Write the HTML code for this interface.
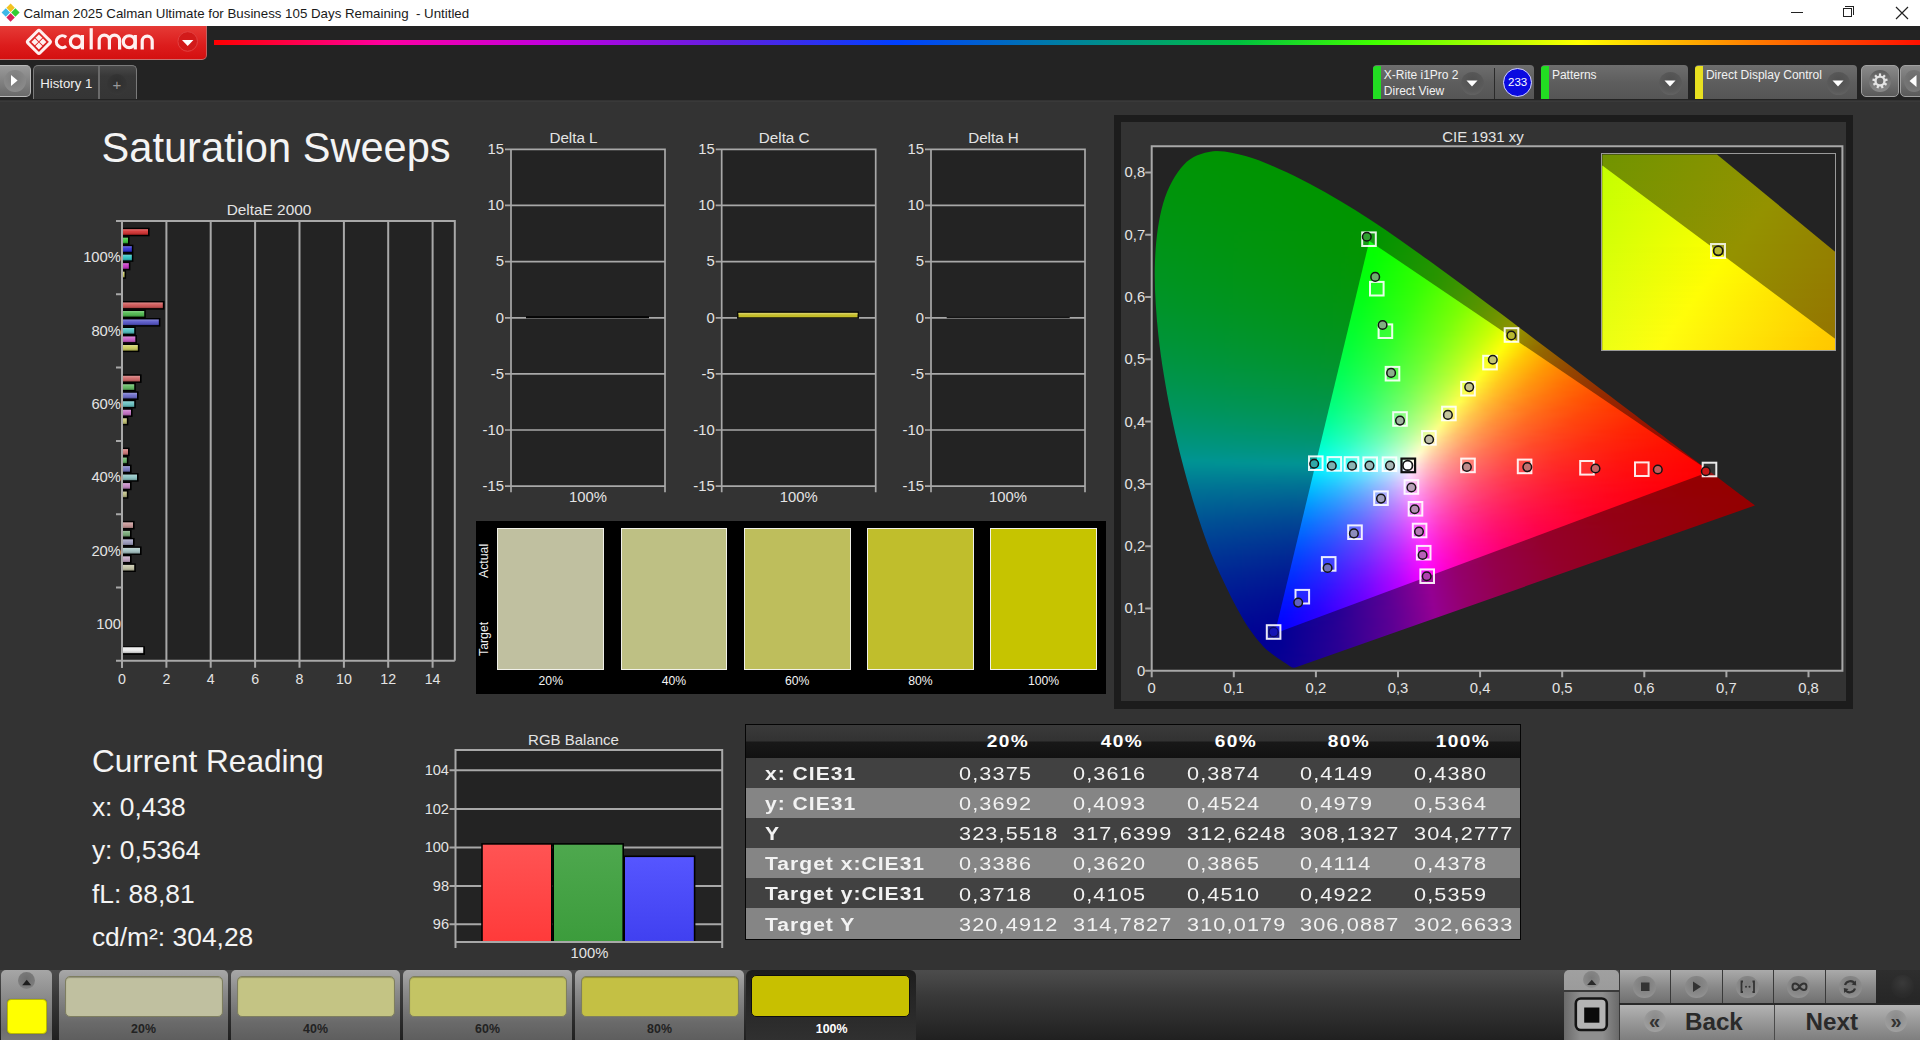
<!DOCTYPE html>
<html><head><meta charset="utf-8"><title>Calman</title>
<style>
*{margin:0;padding:0;box-sizing:border-box}
html,body{width:1920px;height:1040px;overflow:hidden;background:#333333;font-family:"Liberation Sans",sans-serif}
.a{position:absolute}
.t{position:absolute;white-space:nowrap;line-height:1}
</style></head><body>
<div class="a" style="left:0.0px;top:0.0px;width:1920.0px;height:26.0px;background:#ffffff"></div>
<svg class="a" style="left:0;top:0" width="24" height="26" viewBox="0 0 24 26">
<g transform="translate(10.6,12.6) rotate(45)">
<rect x="-6.4" y="-6.4" width="6" height="6" fill="#f2c322"/>
<rect x="0.4" y="-6.4" width="6" height="6" fill="#33cc33"/>
<rect x="-6.4" y="0.4" width="6" height="6" fill="#3fb8e8"/>
<rect x="0.4" y="0.4" width="6" height="6" fill="#d8245a"/>
</g></svg>
<div class="t" style="left:23.5px;top:6.8px;font-size:13.30px;color:#1a1a1a;font-weight:normal;letter-spacing:0.00px;">Calman 2025 Calman Ultimate for Business 105 Days Remaining &nbsp;- Untitled</div>
<div class="a" style="left:1791.0px;top:12.0px;width:12.0px;height:1.0px;background:#222"></div>
<div class="a" style="left:1843.0px;top:8.0px;width:9.0px;height:9.0px;border:1px solid #222;background:#fff"></div>
<div class="a" style="left:1845.0px;top:6.0px;width:9.0px;height:9.0px;border-top:1px solid #222;border-right:1px solid #222"></div>
<svg class="a" style="left:1895px;top:6px" width="14" height="14"><path d="M1,1 L13,13 M13,1 L1,13" stroke="#222" stroke-width="1.2"/></svg>
<div class="a" style="left:0.0px;top:26.0px;width:1920.0px;height:74.0px;background:#232323"></div>
<div class="a" style="left:0.0px;top:26.0px;width:207.0px;height:33.5px;background:linear-gradient(#e63a36,#dc1c1c 60%,#d41010);border-radius:0 0 5px 0;border-bottom:1px solid #c87070;border-right:1px solid #c06060"></div>
<svg class="a" style="left:0;top:26px" width="207" height="34" viewBox="0 26 207 34">
<g transform="translate(38.9,41.9) rotate(45)">
<rect x="-8.6" y="-8.6" width="17.2" height="17.2" rx="1.8" fill="none" stroke="#fff0f0" stroke-width="3.0"/>
<rect x="-5.3" y="-5.3" width="4.9" height="4.9" fill="#fff0f0"/><rect x="0.4" y="-5.3" width="4.9" height="4.9" fill="#fff0f0"/>
<rect x="-5.3" y="0.4" width="4.9" height="4.9" fill="#fff0f0"/><rect x="0.4" y="0.4" width="4.9" height="4.9" fill="#fff0f0"/>
</g>
<g fill="none" stroke="#fff0f0" stroke-width="3.2">
<path d="M66.2,37.2 A5.9,5.9 0 1 0 66.2,46.1"/>
<circle cx="76.3" cy="41.65" r="5.9"/>
<path d="M82.4,35 L82.4,49.4"/>
<path d="M91.2,28.2 L91.2,49.4"/>
<path d="M99.2,49.4 L99.2,40.3 A5.0,5.0 0 0 1 109.4,40.3 L109.4,49.4 M109.4,40.3 A5.0,5.0 0 0 1 119.6,40.3 L119.6,49.4"/>
<circle cx="129.2" cy="41.65" r="5.9"/>
<path d="M135.3,35 L135.3,49.4"/>
<path d="M142.2,49.4 L142.2,41.2 A5.0,5.0 0 0 1 152.2,41.2 L152.2,49.4"/>
</g>
<circle cx="187.7" cy="41.5" r="9.8" fill="#d21a1a" stroke="#e24040" stroke-width="1"/>
<path d="M182,40 L193.4,40 L187.7,46Z" fill="#ffffff"/>
</svg>
<div class="a" style="left:214.0px;top:40.0px;width:1706.0px;height:5.0px;background:linear-gradient(90deg,#ff0000 0%,#ff00a0 10%,#c000e0 20%,#6020e0 30%,#0040ff 40%,#0080a0 50%,#00c040 60%,#40ff00 68%,#ffff00 80%,#ff8000 90%,#ff1000 100%)"></div>
<div class="a" style="left:0.0px;top:65.0px;width:30.5px;height:31.5px;background:linear-gradient(#9a9a9a,#6a6a6a);border:1px solid #b8b8b8;border-left:none;border-radius:0 5px 5px 0"></div>
<div class="a" style="left:3.5px;top:70.0px;width:22.0px;height:22.0px;border-radius:50%;background:radial-gradient(circle at 50% 40%,#7a7a7a,#8a8a8a 70%,#959595)"></div>
<svg class="a" style="left:0;top:60px" width="30" height="40"><path d="M11,15 L17.6,20.5 L11,26Z" fill="#fff"/></svg>
<div class="a" style="left:32.8px;top:65.0px;width:104.0px;height:34.0px;background:linear-gradient(#4a4a4a,#383838 30%,#353535);border:1.5px solid #7a7a7a;border-bottom:none;border-radius:5px 5px 0 0"></div>
<div class="a" style="left:98.0px;top:66.0px;width:1.5px;height:33.0px;background:#6a6a6a"></div>
<div class="t" style="left:40.3px;top:76.5px;font-size:13.20px;color:#f0f0f0;font-weight:normal;letter-spacing:0.00px;">History 1</div>
<div class="a" style="left:106.5px;top:74.4px;width:20.5px;height:20.5px;border-radius:50%;background:radial-gradient(circle at 50% 40%,#2e2e2e,#363636 70%,#404040)"></div>
<div class="t" style="left:116.8px;top:77.2px;font-size:15.00px;color:#9a9a9a;font-weight:normal;letter-spacing:0.00px;transform:translateX(-50%) scaleX(1.000);transform-origin:50% 50%;">+</div>
<div class="a" style="left:1373.3px;top:65.0px;width:161.2px;height:34.0px;background:linear-gradient(#6e6e6e,#5e5e5e 50%,#555);border-radius:4px 4px 0 0"></div>
<div class="a" style="left:1373.3px;top:66.0px;width:7.5px;height:33.0px;background:linear-gradient(90deg,#22dd22,#22dd22);border-radius:3px 0 0 0"></div>
<div class="t" style="left:1383.8px;top:68.6px;font-size:12.00px;color:#f2f2f2;font-weight:normal;letter-spacing:0.00px;">X-Rite i1Pro 2</div>
<div class="t" style="left:1383.8px;top:84.5px;font-size:12.00px;color:#f2f2f2;font-weight:normal;letter-spacing:0.00px;">Direct View</div>
<div class="a" style="left:1460.8px;top:71.5px;width:23.0px;height:23.0px;border-radius:50%;background:radial-gradient(circle at 50% 35%,#505050,#5a5a5a 60%,#6a6a6a)"></div>
<svg class="a" style="left:1465.3px;top:78px" width="14" height="10"><path d="M1.5,2.5 L12.5,2.5 L7,8.5Z" fill="#fff"/></svg>
<div class="a" style="left:1494.2px;top:68.0px;width:1.2px;height:31.0px;background:#2a2a2a"></div>
<div class="a" style="left:1503.0px;top:67.5px;width:29.0px;height:29.0px;border-radius:50%;background:#0a0ae0;border:1.5px solid #d8d8ff"></div>
<div class="t" style="left:1517.6px;top:76.7px;font-size:11.50px;color:#ffffff;font-weight:normal;letter-spacing:0.00px;transform:translateX(-50%) scaleX(1.000);transform-origin:50% 50%;">233</div>
<div class="a" style="left:1541.4px;top:65.0px;width:146.6px;height:34.0px;background:linear-gradient(#6e6e6e,#5e5e5e 50%,#555);border-radius:4px 4px 0 0"></div>
<div class="a" style="left:1541.4px;top:66.0px;width:7.5px;height:33.0px;background:linear-gradient(90deg,#22dd22,#22dd22);border-radius:3px 0 0 0"></div>
<div class="t" style="left:1551.9px;top:68.6px;font-size:12.00px;color:#f2f2f2;font-weight:normal;letter-spacing:0.00px;">Patterns</div>
<div class="a" style="left:1658.5px;top:71.5px;width:23.0px;height:23.0px;border-radius:50%;background:radial-gradient(circle at 50% 35%,#505050,#5a5a5a 60%,#6a6a6a)"></div>
<svg class="a" style="left:1663.0px;top:78px" width="14" height="10"><path d="M1.5,2.5 L12.5,2.5 L7,8.5Z" fill="#fff"/></svg>
<div class="a" style="left:1695.4px;top:65.0px;width:161.9px;height:34.0px;background:linear-gradient(#6e6e6e,#5e5e5e 50%,#555);border-radius:4px 4px 0 0"></div>
<div class="a" style="left:1695.4px;top:66.0px;width:7.5px;height:33.0px;background:linear-gradient(90deg,#e8e020,#e8e020);border-radius:3px 0 0 0"></div>
<div class="t" style="left:1705.9px;top:68.6px;font-size:12.00px;color:#f2f2f2;font-weight:normal;letter-spacing:0.00px;">Direct Display Control</div>
<div class="a" style="left:1826.8px;top:71.5px;width:23.0px;height:23.0px;border-radius:50%;background:radial-gradient(circle at 50% 35%,#505050,#5a5a5a 60%,#6a6a6a)"></div>
<svg class="a" style="left:1831.3px;top:78px" width="14" height="10"><path d="M1.5,2.5 L12.5,2.5 L7,8.5Z" fill="#fff"/></svg>
<div class="a" style="left:1861.0px;top:65.0px;width:38.0px;height:31.5px;background:linear-gradient(#8a8a8a,#5a5a5a);border:1px solid #a0a0a0;border-radius:5px"></div>
<div class="a" style="left:1869.0px;top:70.0px;width:22.0px;height:22.0px;border-radius:50%;background:linear-gradient(#5c5c5c,#7a7a7a 60%,#8a8a8a)"></div>
<svg class="a" style="left:1868px;top:69px" width="24" height="24" viewBox="-12 -12 24 24"><g fill="#e4e4e4"><circle r="5.6"/><rect x="-1.1" y="-7.6" width="2.2" height="3" transform="rotate(0)"/><rect x="-1.1" y="-7.6" width="2.2" height="3" transform="rotate(40)"/><rect x="-1.1" y="-7.6" width="2.2" height="3" transform="rotate(80)"/><rect x="-1.1" y="-7.6" width="2.2" height="3" transform="rotate(120)"/><rect x="-1.1" y="-7.6" width="2.2" height="3" transform="rotate(160)"/><rect x="-1.1" y="-7.6" width="2.2" height="3" transform="rotate(200)"/><rect x="-1.1" y="-7.6" width="2.2" height="3" transform="rotate(240)"/><rect x="-1.1" y="-7.6" width="2.2" height="3" transform="rotate(280)"/><rect x="-1.1" y="-7.6" width="2.2" height="3" transform="rotate(320)"/></g><circle r="3.3" fill="#6e6e6e"/></svg>
<div class="a" style="left:1900.0px;top:65.0px;width:22.0px;height:31.5px;background:linear-gradient(#8a8a8a,#5a5a5a);border:1px solid #a0a0a0;border-radius:5px 0 0 5px"></div>
<div class="a" style="left:1904.0px;top:70.0px;width:20.0px;height:22.0px;border-radius:50%;background:radial-gradient(circle at 50% 40%,#6a6a6a,#777 70%,#808080)"></div>
<svg class="a" style="left:1900px;top:65px" width="20" height="32"><path d="M16.5,10 L9.5,16 L16.5,22Z" fill="#fff"/></svg>
<div class="a" style="left:0.0px;top:100.5px;width:1920.0px;height:1.2px;background:#393939"></div>
<div class="t" style="left:101.5px;top:127.1px;font-size:41.60px;color:#f4f4f4;font-weight:normal;letter-spacing:0.00px;">Saturation Sweeps</div>
<div class="a" style="left:122.0px;top:221.0px;width:332.8px;height:439.8px;background:#232323"></div>
<svg class="a" style="left:0;top:0" width="1920" height="1040"><path d="M166.4,221.0 L166.4,667.8 M210.7,221.0 L210.7,667.8 M255.1,221.0 L255.1,667.8 M299.5,221.0 L299.5,667.8 M343.9,221.0 L343.9,667.8 M388.2,221.0 L388.2,667.8 M432.6,221.0 L432.6,667.8 M122.0,667.8 L122.0,221.0 M122.0,221.0 L454.8,221.0 L454.8,660.8 M116,660.8 L454.8,660.8 M116,221.0 L122.0,221.0 M116,294.3 L122.0,294.3 M116,367.6 L122.0,367.6 M116,440.9 L122.0,440.9 M116,514.2 L122.0,514.2 M116,587.5 L122.0,587.5" stroke="#a8a8a8" stroke-width="2" fill="none"/><defs><linearGradient id="bsh" x1="0" y1="0" x2="0" y2="1"><stop offset="0" stop-color="#fff" stop-opacity="0.35"/><stop offset="0.45" stop-color="#fff" stop-opacity="0.1"/><stop offset="1" stop-color="#000" stop-opacity="0.25"/></linearGradient></defs><rect x="122.0" y="227.7" width="27.6" height="8.6" fill="#000"/><rect x="122.0" y="229.2" width="26.0" height="5.6" fill="#d02424"/><rect x="122.0" y="229.2" width="26.0" height="5.6" fill="url(#bsh)"/><rect x="122.0" y="236.2" width="7.6" height="8.6" fill="#000"/><rect x="122.0" y="237.7" width="6.0" height="5.6" fill="#30c030"/><rect x="122.0" y="237.7" width="6.0" height="5.6" fill="url(#bsh)"/><rect x="122.0" y="244.7" width="11.4" height="8.6" fill="#000"/><rect x="122.0" y="246.2" width="9.8" height="5.6" fill="#2424d0"/><rect x="122.0" y="246.2" width="9.8" height="5.6" fill="url(#bsh)"/><rect x="122.0" y="253.2" width="11.4" height="8.6" fill="#000"/><rect x="122.0" y="254.7" width="9.8" height="5.6" fill="#22c0c0"/><rect x="122.0" y="254.7" width="9.8" height="5.6" fill="url(#bsh)"/><rect x="122.0" y="261.7" width="8.4" height="8.6" fill="#000"/><rect x="122.0" y="263.2" width="6.8" height="5.6" fill="#c024c0"/><rect x="122.0" y="263.2" width="6.8" height="5.6" fill="url(#bsh)"/><rect x="122.0" y="270.2" width="4.1" height="8.6" fill="#000"/><rect x="122.0" y="271.7" width="2.5" height="5.6" fill="#c8c85a"/><rect x="122.0" y="271.7" width="2.5" height="5.6" fill="url(#bsh)"/><rect x="122.0" y="301.0" width="42.4" height="8.6" fill="#000"/><rect x="122.0" y="302.5" width="40.8" height="5.6" fill="#cc4a4a"/><rect x="122.0" y="302.5" width="40.8" height="5.6" fill="url(#bsh)"/><rect x="122.0" y="309.5" width="23.8" height="8.6" fill="#000"/><rect x="122.0" y="311.0" width="22.2" height="5.6" fill="#44b444"/><rect x="122.0" y="311.0" width="22.2" height="5.6" fill="url(#bsh)"/><rect x="122.0" y="318.0" width="38.4" height="8.6" fill="#000"/><rect x="122.0" y="319.5" width="36.8" height="5.6" fill="#4a4ac4"/><rect x="122.0" y="319.5" width="36.8" height="5.6" fill="url(#bsh)"/><rect x="122.0" y="326.5" width="13.8" height="8.6" fill="#000"/><rect x="122.0" y="328.0" width="12.2" height="5.6" fill="#44bcbc"/><rect x="122.0" y="328.0" width="12.2" height="5.6" fill="url(#bsh)"/><rect x="122.0" y="335.0" width="14.9" height="8.6" fill="#000"/><rect x="122.0" y="336.5" width="13.3" height="5.6" fill="#c252c2"/><rect x="122.0" y="336.5" width="13.3" height="5.6" fill="url(#bsh)"/><rect x="122.0" y="343.5" width="17.4" height="8.6" fill="#000"/><rect x="122.0" y="345.0" width="15.8" height="5.6" fill="#c8c852"/><rect x="122.0" y="345.0" width="15.8" height="5.6" fill="url(#bsh)"/><rect x="122.0" y="374.3" width="19.6" height="8.6" fill="#000"/><rect x="122.0" y="375.8" width="18.0" height="5.6" fill="#cc5e5e"/><rect x="122.0" y="375.8" width="18.0" height="5.6" fill="url(#bsh)"/><rect x="122.0" y="382.8" width="13.8" height="8.6" fill="#000"/><rect x="122.0" y="384.3" width="12.2" height="5.6" fill="#56b456"/><rect x="122.0" y="384.3" width="12.2" height="5.6" fill="url(#bsh)"/><rect x="122.0" y="391.3" width="16.6" height="8.6" fill="#000"/><rect x="122.0" y="392.8" width="15.0" height="5.6" fill="#6464c8"/><rect x="122.0" y="392.8" width="15.0" height="5.6" fill="url(#bsh)"/><rect x="122.0" y="399.8" width="13.8" height="8.6" fill="#000"/><rect x="122.0" y="401.3" width="12.2" height="5.6" fill="#5cbcbc"/><rect x="122.0" y="401.3" width="12.2" height="5.6" fill="url(#bsh)"/><rect x="122.0" y="408.3" width="10.6" height="8.6" fill="#000"/><rect x="122.0" y="409.8" width="9.0" height="5.6" fill="#c068c0"/><rect x="122.0" y="409.8" width="9.0" height="5.6" fill="url(#bsh)"/><rect x="122.0" y="416.8" width="6.4" height="8.6" fill="#000"/><rect x="122.0" y="418.3" width="4.8" height="5.6" fill="#bebe6a"/><rect x="122.0" y="418.3" width="4.8" height="5.6" fill="url(#bsh)"/><rect x="122.0" y="447.6" width="7.6" height="8.6" fill="#000"/><rect x="122.0" y="449.1" width="6.0" height="5.6" fill="#cc7070"/><rect x="122.0" y="449.1" width="6.0" height="5.6" fill="url(#bsh)"/><rect x="122.0" y="456.1" width="6.4" height="8.6" fill="#000"/><rect x="122.0" y="457.6" width="4.8" height="5.6" fill="#5cac5c"/><rect x="122.0" y="457.6" width="4.8" height="5.6" fill="url(#bsh)"/><rect x="122.0" y="464.6" width="9.6" height="8.6" fill="#000"/><rect x="122.0" y="466.1" width="8.0" height="5.6" fill="#7070bc"/><rect x="122.0" y="466.1" width="8.0" height="5.6" fill="url(#bsh)"/><rect x="122.0" y="473.1" width="16.6" height="8.6" fill="#000"/><rect x="122.0" y="474.6" width="15.0" height="5.6" fill="#84bebe"/><rect x="122.0" y="474.6" width="15.0" height="5.6" fill="url(#bsh)"/><rect x="122.0" y="481.6" width="9.6" height="8.6" fill="#000"/><rect x="122.0" y="483.1" width="8.0" height="5.6" fill="#c080c0"/><rect x="122.0" y="483.1" width="8.0" height="5.6" fill="url(#bsh)"/><rect x="122.0" y="490.1" width="6.4" height="8.6" fill="#000"/><rect x="122.0" y="491.6" width="4.8" height="5.6" fill="#b6b67a"/><rect x="122.0" y="491.6" width="4.8" height="5.6" fill="url(#bsh)"/><rect x="122.0" y="520.9" width="12.6" height="8.6" fill="#000"/><rect x="122.0" y="522.4" width="11.0" height="5.6" fill="#c08c8c"/><rect x="122.0" y="522.4" width="11.0" height="5.6" fill="url(#bsh)"/><rect x="122.0" y="529.4" width="9.6" height="8.6" fill="#000"/><rect x="122.0" y="530.9" width="8.0" height="5.6" fill="#6ea46e"/><rect x="122.0" y="530.9" width="8.0" height="5.6" fill="url(#bsh)"/><rect x="122.0" y="537.9" width="12.6" height="8.6" fill="#000"/><rect x="122.0" y="539.4" width="11.0" height="5.6" fill="#9494b8"/><rect x="122.0" y="539.4" width="11.0" height="5.6" fill="url(#bsh)"/><rect x="122.0" y="546.4" width="19.6" height="8.6" fill="#000"/><rect x="122.0" y="547.9" width="18.0" height="5.6" fill="#a0c0c0"/><rect x="122.0" y="547.9" width="18.0" height="5.6" fill="url(#bsh)"/><rect x="122.0" y="554.9" width="9.6" height="8.6" fill="#000"/><rect x="122.0" y="556.4" width="8.0" height="5.6" fill="#bc9ebc"/><rect x="122.0" y="556.4" width="8.0" height="5.6" fill="url(#bsh)"/><rect x="122.0" y="563.4" width="13.8" height="8.6" fill="#000"/><rect x="122.0" y="564.9" width="12.2" height="5.6" fill="#bebe9e"/><rect x="122.0" y="564.9" width="12.2" height="5.6" fill="url(#bsh)"/><rect x="122.0" y="646.3" width="23.0" height="8.6" fill="#000"/><rect x="122.0" y="647.3" width="21.2" height="5.8" fill="#ececec"/><rect x="122.0" y="647.3" width="21.2" height="5.8" fill="url(#bsh)"/><path d="M122.0,667.8 L122.0,221.0" stroke="#a8a8a8" stroke-width="2" fill="none"/></svg>
<div class="t" style="left:121.0px;top:250.3px;font-size:14.80px;color:#e4e4e4;font-weight:normal;letter-spacing:0.00px;transform:translateX(-100%) scaleX(1.000);transform-origin:100% 50%;">100%</div>
<div class="t" style="left:121.0px;top:323.6px;font-size:14.80px;color:#e4e4e4;font-weight:normal;letter-spacing:0.00px;transform:translateX(-100%) scaleX(1.000);transform-origin:100% 50%;">80%</div>
<div class="t" style="left:121.0px;top:396.9px;font-size:14.80px;color:#e4e4e4;font-weight:normal;letter-spacing:0.00px;transform:translateX(-100%) scaleX(1.000);transform-origin:100% 50%;">60%</div>
<div class="t" style="left:121.0px;top:470.2px;font-size:14.80px;color:#e4e4e4;font-weight:normal;letter-spacing:0.00px;transform:translateX(-100%) scaleX(1.000);transform-origin:100% 50%;">40%</div>
<div class="t" style="left:121.0px;top:543.5px;font-size:14.80px;color:#e4e4e4;font-weight:normal;letter-spacing:0.00px;transform:translateX(-100%) scaleX(1.000);transform-origin:100% 50%;">20%</div>
<div class="t" style="left:121.0px;top:616.8px;font-size:14.80px;color:#e4e4e4;font-weight:normal;letter-spacing:0.00px;transform:translateX(-100%) scaleX(1.000);transform-origin:100% 50%;">100</div>
<div class="t" style="left:122.0px;top:671.5px;font-size:14.20px;color:#e4e4e4;font-weight:normal;letter-spacing:0.00px;transform:translateX(-50%) scaleX(1.000);transform-origin:50% 50%;">0</div>
<div class="t" style="left:166.4px;top:671.5px;font-size:14.20px;color:#e4e4e4;font-weight:normal;letter-spacing:0.00px;transform:translateX(-50%) scaleX(1.000);transform-origin:50% 50%;">2</div>
<div class="t" style="left:210.7px;top:671.5px;font-size:14.20px;color:#e4e4e4;font-weight:normal;letter-spacing:0.00px;transform:translateX(-50%) scaleX(1.000);transform-origin:50% 50%;">4</div>
<div class="t" style="left:255.1px;top:671.5px;font-size:14.20px;color:#e4e4e4;font-weight:normal;letter-spacing:0.00px;transform:translateX(-50%) scaleX(1.000);transform-origin:50% 50%;">6</div>
<div class="t" style="left:299.5px;top:671.5px;font-size:14.20px;color:#e4e4e4;font-weight:normal;letter-spacing:0.00px;transform:translateX(-50%) scaleX(1.000);transform-origin:50% 50%;">8</div>
<div class="t" style="left:343.9px;top:671.5px;font-size:14.20px;color:#e4e4e4;font-weight:normal;letter-spacing:0.00px;transform:translateX(-50%) scaleX(1.000);transform-origin:50% 50%;">10</div>
<div class="t" style="left:388.2px;top:671.5px;font-size:14.20px;color:#e4e4e4;font-weight:normal;letter-spacing:0.00px;transform:translateX(-50%) scaleX(1.000);transform-origin:50% 50%;">12</div>
<div class="t" style="left:432.6px;top:671.5px;font-size:14.20px;color:#e4e4e4;font-weight:normal;letter-spacing:0.00px;transform:translateX(-50%) scaleX(1.000);transform-origin:50% 50%;">14</div>
<div class="t" style="left:269.0px;top:202.3px;font-size:15.40px;color:#e4e4e4;font-weight:normal;letter-spacing:0.00px;transform:translateX(-50%) scaleX(1.000);transform-origin:50% 50%;">DeltaE 2000</div>
<div class="a" style="left:511.0px;top:149.3px;width:154.0px;height:336.9px;background:#232323"></div>
<div class="a" style="left:721.7px;top:149.3px;width:154.0px;height:336.9px;background:#232323"></div>
<div class="a" style="left:931.0px;top:149.3px;width:154.0px;height:336.9px;background:#232323"></div>
<svg class="a" style="left:0;top:0" width="1920" height="1040"><path d="M505.0,205.4 L665.0,205.4 M505.0,261.6 L665.0,261.6 M505.0,317.8 L665.0,317.8 M505.0,373.9 L665.0,373.9 M505.0,430.0 L665.0,430.0 M505.0,149.3 L511.0,149.3 M505.0,486.2 L665.0,486.2 M511.0,492.2 L511.0,149.3 L665.0,149.3 L665.0,492.2" stroke="#a8a8a8" stroke-width="1.7" fill="none"/><rect x="526.0" y="316.1" width="123" height="2.2" fill="#050505"/><path d="M715.7,205.4 L875.7,205.4 M715.7,261.6 L875.7,261.6 M715.7,317.8 L875.7,317.8 M715.7,373.9 L875.7,373.9 M715.7,430.0 L875.7,430.0 M715.7,149.3 L721.7,149.3 M715.7,486.2 L875.7,486.2 M721.7,492.2 L721.7,149.3 L875.7,149.3 L875.7,492.2" stroke="#a8a8a8" stroke-width="1.7" fill="none"/><rect x="737.0" y="311.4" width="122" height="7.4" fill="#0a0a0a"/><rect x="738.5" y="312.9" width="119" height="4.4" fill="#c4bc28"/><rect x="738.5" y="312.9" width="119" height="1.5" fill="#d8d060"/><path d="M925.0,205.4 L1085.0,205.4 M925.0,261.6 L1085.0,261.6 M925.0,317.8 L1085.0,317.8 M925.0,373.9 L1085.0,373.9 M925.0,430.0 L1085.0,430.0 M925.0,149.3 L931.0,149.3 M925.0,486.2 L1085.0,486.2 M931.0,492.2 L931.0,149.3 L1085.0,149.3 L1085.0,492.2" stroke="#a8a8a8" stroke-width="1.7" fill="none"/><rect x="946.7" y="316.6" width="123" height="1.6" fill="#151515"/></svg>
<div class="t" style="left:504.0px;top:142.0px;font-size:14.80px;color:#e4e4e4;font-weight:normal;letter-spacing:0.00px;transform:translateX(-100%) scaleX(1.000);transform-origin:100% 50%;">15</div>
<div class="t" style="left:504.0px;top:198.2px;font-size:14.80px;color:#e4e4e4;font-weight:normal;letter-spacing:0.00px;transform:translateX(-100%) scaleX(1.000);transform-origin:100% 50%;">10</div>
<div class="t" style="left:504.0px;top:254.3px;font-size:14.80px;color:#e4e4e4;font-weight:normal;letter-spacing:0.00px;transform:translateX(-100%) scaleX(1.000);transform-origin:100% 50%;">5</div>
<div class="t" style="left:504.0px;top:310.5px;font-size:14.80px;color:#e4e4e4;font-weight:normal;letter-spacing:0.00px;transform:translateX(-100%) scaleX(1.000);transform-origin:100% 50%;">0</div>
<div class="t" style="left:504.0px;top:366.6px;font-size:14.80px;color:#e4e4e4;font-weight:normal;letter-spacing:0.00px;transform:translateX(-100%) scaleX(1.000);transform-origin:100% 50%;">-5</div>
<div class="t" style="left:504.0px;top:422.8px;font-size:14.80px;color:#e4e4e4;font-weight:normal;letter-spacing:0.00px;transform:translateX(-100%) scaleX(1.000);transform-origin:100% 50%;">-10</div>
<div class="t" style="left:504.0px;top:478.9px;font-size:14.80px;color:#e4e4e4;font-weight:normal;letter-spacing:0.00px;transform:translateX(-100%) scaleX(1.000);transform-origin:100% 50%;">-15</div>
<div class="t" style="left:573.5px;top:130.0px;font-size:15.20px;color:#e4e4e4;font-weight:normal;letter-spacing:0.00px;transform:translateX(-50%) scaleX(1.000);transform-origin:50% 50%;">Delta L</div>
<div class="t" style="left:588.0px;top:490.0px;font-size:14.80px;color:#e4e4e4;font-weight:normal;letter-spacing:0.00px;transform:translateX(-50%) scaleX(1.000);transform-origin:50% 50%;">100%</div>
<div class="t" style="left:714.7px;top:142.0px;font-size:14.80px;color:#e4e4e4;font-weight:normal;letter-spacing:0.00px;transform:translateX(-100%) scaleX(1.000);transform-origin:100% 50%;">15</div>
<div class="t" style="left:714.7px;top:198.2px;font-size:14.80px;color:#e4e4e4;font-weight:normal;letter-spacing:0.00px;transform:translateX(-100%) scaleX(1.000);transform-origin:100% 50%;">10</div>
<div class="t" style="left:714.7px;top:254.3px;font-size:14.80px;color:#e4e4e4;font-weight:normal;letter-spacing:0.00px;transform:translateX(-100%) scaleX(1.000);transform-origin:100% 50%;">5</div>
<div class="t" style="left:714.7px;top:310.5px;font-size:14.80px;color:#e4e4e4;font-weight:normal;letter-spacing:0.00px;transform:translateX(-100%) scaleX(1.000);transform-origin:100% 50%;">0</div>
<div class="t" style="left:714.7px;top:366.6px;font-size:14.80px;color:#e4e4e4;font-weight:normal;letter-spacing:0.00px;transform:translateX(-100%) scaleX(1.000);transform-origin:100% 50%;">-5</div>
<div class="t" style="left:714.7px;top:422.8px;font-size:14.80px;color:#e4e4e4;font-weight:normal;letter-spacing:0.00px;transform:translateX(-100%) scaleX(1.000);transform-origin:100% 50%;">-10</div>
<div class="t" style="left:714.7px;top:478.9px;font-size:14.80px;color:#e4e4e4;font-weight:normal;letter-spacing:0.00px;transform:translateX(-100%) scaleX(1.000);transform-origin:100% 50%;">-15</div>
<div class="t" style="left:784.2px;top:130.0px;font-size:15.20px;color:#e4e4e4;font-weight:normal;letter-spacing:0.00px;transform:translateX(-50%) scaleX(1.000);transform-origin:50% 50%;">Delta C</div>
<div class="t" style="left:798.7px;top:490.0px;font-size:14.80px;color:#e4e4e4;font-weight:normal;letter-spacing:0.00px;transform:translateX(-50%) scaleX(1.000);transform-origin:50% 50%;">100%</div>
<div class="t" style="left:924.0px;top:142.0px;font-size:14.80px;color:#e4e4e4;font-weight:normal;letter-spacing:0.00px;transform:translateX(-100%) scaleX(1.000);transform-origin:100% 50%;">15</div>
<div class="t" style="left:924.0px;top:198.2px;font-size:14.80px;color:#e4e4e4;font-weight:normal;letter-spacing:0.00px;transform:translateX(-100%) scaleX(1.000);transform-origin:100% 50%;">10</div>
<div class="t" style="left:924.0px;top:254.3px;font-size:14.80px;color:#e4e4e4;font-weight:normal;letter-spacing:0.00px;transform:translateX(-100%) scaleX(1.000);transform-origin:100% 50%;">5</div>
<div class="t" style="left:924.0px;top:310.5px;font-size:14.80px;color:#e4e4e4;font-weight:normal;letter-spacing:0.00px;transform:translateX(-100%) scaleX(1.000);transform-origin:100% 50%;">0</div>
<div class="t" style="left:924.0px;top:366.6px;font-size:14.80px;color:#e4e4e4;font-weight:normal;letter-spacing:0.00px;transform:translateX(-100%) scaleX(1.000);transform-origin:100% 50%;">-5</div>
<div class="t" style="left:924.0px;top:422.8px;font-size:14.80px;color:#e4e4e4;font-weight:normal;letter-spacing:0.00px;transform:translateX(-100%) scaleX(1.000);transform-origin:100% 50%;">-10</div>
<div class="t" style="left:924.0px;top:478.9px;font-size:14.80px;color:#e4e4e4;font-weight:normal;letter-spacing:0.00px;transform:translateX(-100%) scaleX(1.000);transform-origin:100% 50%;">-15</div>
<div class="t" style="left:993.5px;top:130.0px;font-size:15.20px;color:#e4e4e4;font-weight:normal;letter-spacing:0.00px;transform:translateX(-50%) scaleX(1.000);transform-origin:50% 50%;">Delta H</div>
<div class="t" style="left:1008.0px;top:490.0px;font-size:14.80px;color:#e4e4e4;font-weight:normal;letter-spacing:0.00px;transform:translateX(-50%) scaleX(1.000);transform-origin:50% 50%;">100%</div>
<div class="a" style="left:475.8px;top:521.0px;width:630.5px;height:172.5px;background:#000"></div>
<div class="a" style="left:497.4px;top:528.3px;width:106.8px;height:141.5px;background:#c0c0a0;border:1.5px solid #f0f0e8"></div>
<div class="t" style="left:550.8px;top:675.4px;font-size:12.20px;color:#f4f4f4;font-weight:normal;letter-spacing:0.00px;transform:translateX(-50%) scaleX(1.000);transform-origin:50% 50%;">20%</div>
<div class="a" style="left:620.6px;top:528.3px;width:106.8px;height:141.5px;background:#bec084;border:1.5px solid #f0f0e8"></div>
<div class="t" style="left:674.0px;top:675.4px;font-size:12.20px;color:#f4f4f4;font-weight:normal;letter-spacing:0.00px;transform:translateX(-50%) scaleX(1.000);transform-origin:50% 50%;">40%</div>
<div class="a" style="left:743.8px;top:528.3px;width:106.8px;height:141.5px;background:#bebe5c;border:1.5px solid #f0f0e8"></div>
<div class="t" style="left:797.2px;top:675.4px;font-size:12.20px;color:#f4f4f4;font-weight:normal;letter-spacing:0.00px;transform:translateX(-50%) scaleX(1.000);transform-origin:50% 50%;">60%</div>
<div class="a" style="left:867.0px;top:528.3px;width:106.8px;height:141.5px;background:#c0be2c;border:1.5px solid #f0f0e8"></div>
<div class="t" style="left:920.4px;top:675.4px;font-size:12.20px;color:#f4f4f4;font-weight:normal;letter-spacing:0.00px;transform:translateX(-50%) scaleX(1.000);transform-origin:50% 50%;">80%</div>
<div class="a" style="left:990.2px;top:528.3px;width:106.8px;height:141.5px;background:#c6c400;border:1.5px solid #f0f0e8"></div>
<div class="t" style="left:1043.6px;top:675.4px;font-size:12.20px;color:#f4f4f4;font-weight:normal;letter-spacing:0.00px;transform:translateX(-50%) scaleX(1.000);transform-origin:50% 50%;">100%</div>
<div class="t" style="left:478px;top:577.5px;font-size:12.3px;color:#f0f0f0;transform:rotate(-90deg);transform-origin:0 0">Actual</div>
<div class="t" style="left:478px;top:656px;font-size:12.3px;color:#f0f0f0;transform:rotate(-90deg);transform-origin:0 0">Target</div>
<div class="a" style="left:1113.7px;top:114.6px;width:739.0px;height:594.0px;background:#1c1c1c"></div>
<div class="a" style="left:1120.5px;top:121.9px;width:725.0px;height:579.6px;background:#333333"></div>
<div class="a" style="left:1151.7px;top:146.3px;width:690.7px;height:524.5px;background:#232323"></div>
<div class="a" style="left:0;top:0;width:1920px;height:1040px;clip-path:path('M1294.6,667.7 C1294.5,667.7 1294.3,667.8 1294.0,667.8 C1293.6,667.8 1293.0,667.8 1292.4,667.6 C1291.8,667.4 1291.3,667.1 1290.4,666.5 C1289.4,665.9 1288.4,665.1 1286.7,664.0 C1285.0,662.9 1283.1,661.7 1280.3,659.8 C1277.5,657.8 1272.8,654.6 1269.9,652.3 C1267.0,650.0 1265.7,648.9 1262.9,645.9 C1260.2,643.0 1257.1,639.7 1253.6,634.8 C1250.0,629.9 1246.2,624.5 1241.7,616.7 C1237.2,608.9 1232.3,600.0 1226.7,588.1 C1221.1,576.3 1214.4,562.6 1208.1,545.8 C1201.8,528.9 1195.2,509.0 1189.0,487.0 C1182.8,465.0 1176.1,439.0 1171.0,413.7 C1165.9,388.4 1161.1,360.5 1158.4,335.4 C1155.8,310.2 1154.1,284.9 1154.9,262.9 C1155.7,240.9 1158.3,219.7 1163.1,203.4 C1167.9,187.1 1175.4,173.6 1183.6,164.9 C1191.9,156.2 1202.4,152.8 1212.7,151.3 C1223.0,149.9 1234.5,153.2 1245.5,156.1 C1256.5,159.0 1267.9,164.1 1278.7,168.7 C1289.5,173.4 1299.8,178.5 1310.1,183.9 C1320.3,189.2 1330.2,194.9 1340.2,200.9 C1350.2,206.8 1360.1,213.1 1369.9,219.6 C1379.8,226.0 1389.5,232.7 1399.3,239.5 C1409.1,246.3 1418.8,253.3 1428.6,260.3 C1438.4,267.3 1448.2,274.5 1458.0,281.7 C1467.8,288.9 1477.5,296.2 1487.2,303.5 C1497.0,310.7 1506.7,318.0 1516.3,325.2 C1525.9,332.4 1535.4,339.6 1544.8,346.7 C1554.2,353.8 1563.4,360.8 1572.5,367.6 C1581.5,374.5 1590.4,381.2 1599.0,387.7 C1607.6,394.2 1616.0,400.5 1623.9,406.5 C1631.9,412.5 1639.6,418.4 1646.7,423.8 C1653.8,429.1 1657.9,432.2 1666.5,438.7 C1675.1,445.2 1689.5,456.1 1698.3,462.7 C1707.1,469.4 1713.7,474.4 1719.4,478.7 C1725.2,483.1 1729.1,486.0 1732.9,488.9 C1736.6,491.7 1739.5,493.9 1742.0,495.8 C1744.5,497.7 1746.2,499.0 1747.7,500.1 C1749.3,501.2 1749.8,501.7 1751.0,502.6 C1752.2,503.5 1754.2,505.0 1754.9,505.5 Z')"><div class="a" style="left:0;top:0;width:1920px;height:1040px;filter:blur(1.3px)"><div style="position:absolute;left:1198px;top:150px;width:42px;height:3px;background:linear-gradient(90deg,#009403 0px,#009400 42px)"></div><div style="position:absolute;left:1190px;top:153px;width:62px;height:3px;background:linear-gradient(90deg,#009404 0px,#009400 62px)"></div><div style="position:absolute;left:1184px;top:156px;width:77px;height:3px;background:linear-gradient(90deg,#009405 0px,#009400 77px)"></div><div style="position:absolute;left:1180px;top:159px;width:89px;height:3px;background:linear-gradient(90deg,#009405 0px,#009400 89px)"></div><div style="position:absolute;left:1177px;top:162px;width:100px;height:3px;background:linear-gradient(90deg,#009406 0px,#009400 100px)"></div><div style="position:absolute;left:1174px;top:165px;width:110px;height:3px;background:linear-gradient(90deg,#009407 0px,#009400 110px)"></div><div style="position:absolute;left:1172px;top:168px;width:118px;height:3px;background:linear-gradient(90deg,#009407 0px,#009400 118px)"></div><div style="position:absolute;left:1170px;top:171px;width:127px;height:3px;background:linear-gradient(90deg,#009408 0px,#009400 127px)"></div><div style="position:absolute;left:1168px;top:174px;width:135px;height:3px;background:linear-gradient(90deg,#009409 0px,#009400 133px,#009400 135px)"></div><div style="position:absolute;left:1166px;top:177px;width:143px;height:3px;background:linear-gradient(90deg,#009409 0px,#009400 143px)"></div><div style="position:absolute;left:1165px;top:180px;width:150px;height:3px;background:linear-gradient(90deg,#00940a 0px,#009400 146px,#009400 150px)"></div><div style="position:absolute;left:1163px;top:183px;width:158px;height:3px;background:linear-gradient(90deg,#00940b 0px,#009400 150px,#009400 158px)"></div><div style="position:absolute;left:1162px;top:186px;width:164px;height:3px;background:linear-gradient(90deg,#00940b 0px,#009400 156px,#009400 164px)"></div><div style="position:absolute;left:1161px;top:189px;width:170px;height:3px;background:linear-gradient(90deg,#00940c 0px,#009400 158px,#009400 170px)"></div><div style="position:absolute;left:1159px;top:192px;width:178px;height:3px;background:linear-gradient(90deg,#00940c 0px,#009400 168px,#009400 178px)"></div><div style="position:absolute;left:1158px;top:195px;width:184px;height:3px;background:linear-gradient(90deg,#00940d 0px,#009400 172px,#009400 184px)"></div><div style="position:absolute;left:1157px;top:198px;width:190px;height:3px;background:linear-gradient(90deg,#00940e 0px,#009400 174px,#009400 190px)"></div><div style="position:absolute;left:1156px;top:201px;width:196px;height:3px;background:linear-gradient(90deg,#00940e 0px,#009400 182px,#009400 196px)"></div><div style="position:absolute;left:1156px;top:204px;width:201px;height:3px;background:linear-gradient(90deg,#00940f 0px,#009400 185px,#009400 201px)"></div><div style="position:absolute;left:1155px;top:207px;width:207px;height:3px;background:linear-gradient(90deg,#009410 0px,#009400 187px,#009400 207px)"></div><div style="position:absolute;left:1154px;top:210px;width:212px;height:3px;background:linear-gradient(90deg,#009410 0px,#009400 196px,#009400 212px)"></div><div style="position:absolute;left:1154px;top:213px;width:217px;height:3px;background:linear-gradient(90deg,#009411 0px,#009400 197px,#009400 217px)"></div><div style="position:absolute;left:1153px;top:216px;width:223px;height:3px;background:linear-gradient(90deg,#009412 0px,#009400 201px,#009400 223px)"></div><div style="position:absolute;left:1152px;top:219px;width:228px;height:3px;background:linear-gradient(90deg,#009412 0px,#009400 210px,#029400 228px)"></div><div style="position:absolute;left:1152px;top:222px;width:233px;height:3px;background:linear-gradient(90deg,#009413 0px,#009400 213px,#049400 233px)"></div><div style="position:absolute;left:1151px;top:225px;width:238px;height:3px;background:linear-gradient(90deg,#009414 0px,#009400 218px,#059400 238px)"></div><div style="position:absolute;left:1151px;top:228px;width:242px;height:3px;background:linear-gradient(90deg,#009415 0px,#009400 220px,#079400 242px)"></div><div style="position:absolute;left:1151px;top:231px;width:247px;height:3px;background:linear-gradient(90deg,#009415 0px,#029400 227px,#0a9400 247px)"></div><div style="position:absolute;left:1150px;top:234px;width:252px;height:3px;background:linear-gradient(90deg,#009416 0px,#029400 228px,#0c9400 252px)"></div><div style="position:absolute;left:1150px;top:237px;width:257px;height:3px;background:linear-gradient(90deg,#009417 0px,#029400 227px,#0f9400 257px)"></div><div style="position:absolute;left:1150px;top:240px;width:261px;height:3px;background:linear-gradient(90deg,#009417 0px,#029400 227px,#119400 261px)"></div><div style="position:absolute;left:1149px;top:243px;width:266px;height:3px;background:linear-gradient(90deg,#009418 0px,#029400 226px,#149400 266px)"></div><div style="position:absolute;left:1149px;top:246px;width:270px;height:3px;background:linear-gradient(90deg,#009419 0px,#029400 226px,#179400 270px)"></div><div style="position:absolute;left:1149px;top:249px;width:275px;height:3px;background:linear-gradient(90deg,#00941a 0px,#029401 225px,#1a9400 275px)"></div><div style="position:absolute;left:1149px;top:252px;width:279px;height:3px;background:linear-gradient(90deg,#00941b 0px,#029401 223px,#1d9400 279px)"></div><div style="position:absolute;left:1149px;top:255px;width:283px;height:3px;background:linear-gradient(90deg,#00941b 0px,#029402 223px,#209400 283px)"></div><div style="position:absolute;left:1148px;top:258px;width:288px;height:3px;background:linear-gradient(90deg,#00941c 0px,#029403 224px,#239400 288px)"></div><div style="position:absolute;left:1148px;top:261px;width:292px;height:3px;background:linear-gradient(90deg,#00941d 0px,#029403 222px,#219400 284px,#269400 292px)"></div><div style="position:absolute;left:1148px;top:264px;width:296px;height:3px;background:linear-gradient(90deg,#00941e 0px,#029404 222px,#279400 292px,#2a9400 296px)"></div><div style="position:absolute;left:1148px;top:267px;width:301px;height:3px;background:linear-gradient(90deg,#00941f 0px,#029405 221px,#269400 289px,#2e9400 301px)"></div><div style="position:absolute;left:1148px;top:270px;width:305px;height:3px;background:linear-gradient(90deg,#009420 0px,#029405 221px,#2c9400 297px,#329400 305px)"></div><div style="position:absolute;left:1148px;top:273px;width:309px;height:3px;background:linear-gradient(90deg,#009421 0px,#029406 219px,#259400 285px,#369400 309px)"></div><div style="position:absolute;left:1148px;top:276px;width:313px;height:3px;background:linear-gradient(90deg,#009421 0px,#029407 219px,#269400 285px,#3a9400 313px)"></div><div style="position:absolute;left:1148px;top:279px;width:317px;height:3px;background:linear-gradient(90deg,#009422 0px,#029408 217px,#239400 279px,#3e9400 317px)"></div><div style="position:absolute;left:1148px;top:282px;width:321px;height:3px;background:linear-gradient(90deg,#009423 0px,#029409 217px,#289400 285px,#439400 321px)"></div><div style="position:absolute;left:1148px;top:285px;width:325px;height:3px;background:linear-gradient(90deg,#009424 0px,#029409 217px,#2a9400 287px,#479400 325px)"></div><div style="position:absolute;left:1148px;top:288px;width:329px;height:3px;background:linear-gradient(90deg,#009425 0px,#02940b 215px,#239402 275px,#4c9400 329px)"></div><div style="position:absolute;left:1149px;top:291px;width:332px;height:3px;background:linear-gradient(90deg,#009426 0px,#02940b 214px,#259403 276px,#519400 332px)"></div><div style="position:absolute;left:1149px;top:294px;width:336px;height:3px;background:linear-gradient(90deg,#009427 0px,#02940c 214px,#299403 280px,#569400 336px)"></div><div style="position:absolute;left:1149px;top:297px;width:340px;height:3px;background:linear-gradient(90deg,#009428 0px,#02940d 212px,#249404 272px,#5c9400 340px)"></div><div style="position:absolute;left:1149px;top:300px;width:344px;height:3px;background:linear-gradient(90deg,#009429 0px,#02940e 212px,#289405 276px,#5a9400 336px,#629400 344px)"></div><div style="position:absolute;left:1149px;top:303px;width:348px;height:3px;background:linear-gradient(90deg,#00942a 0px,#029410 210px,#239407 268px,#589400 332px,#689400 348px)"></div><div style="position:absolute;left:1149px;top:306px;width:352px;height:3px;background:linear-gradient(90deg,#00942b 0px,#029410 210px,#279407 272px,#5c9400 334px,#6e9400 352px)"></div><div style="position:absolute;left:1150px;top:309px;width:355px;height:3px;background:linear-gradient(90deg,#00942c 0px,#029412 207px,#219409 261px,#589400 327px,#749400 355px)"></div><div style="position:absolute;left:1150px;top:312px;width:359px;height:3px;background:linear-gradient(90deg,#00942d 0px,#029413 207px,#269409 267px,#5c9400 329px,#7b9400 359px)"></div><div style="position:absolute;left:1150px;top:315px;width:363px;height:3px;background:linear-gradient(90deg,#00942f 0px,#029414 207px,#2a9409 271px,#649400 335px,#829400 363px)"></div><div style="position:absolute;left:1150px;top:318px;width:367px;height:3px;background:linear-gradient(90deg,#009430 0px,#029415 205px,#25940c 263px,#5b9401 325px,#8a9400 367px)"></div><div style="position:absolute;left:1151px;top:321px;width:370px;height:3px;background:linear-gradient(90deg,#009431 0px,#029416 204px,#23940d 258px,#5d9402 324px,#929400 370px)"></div><div style="position:absolute;left:1151px;top:324px;width:374px;height:3px;background:linear-gradient(90deg,#009432 0px,#029417 204px,#27940e 262px,#619403 326px,#949300 370px,#948e00 374px)"></div><div style="position:absolute;left:1151px;top:327px;width:378px;height:3px;background:linear-gradient(90deg,#009433 0px,#029419 202px,#229410 254px,#599405 316px,#949200 368px,#948600 378px)"></div><div style="position:absolute;left:1151px;top:330px;width:382px;height:3px;background:linear-gradient(90deg,#009435 0px,#02941a 202px,#269411 258px,#5f9405 320px,#949200 366px,#947f00 382px)"></div><div style="position:absolute;left:1152px;top:333px;width:385px;height:3px;background:linear-gradient(90deg,#009436 0px,#02941c 199px,#249413 253px,#5f9407 317px,#949400 361px,#947900 385px)"></div><div style="position:absolute;left:1152px;top:336px;width:389px;height:3px;background:linear-gradient(90deg,#009437 0px,#02941d 199px,#279413 255px,#5f9408 315px,#949300 359px,#947200 389px)"></div><div style="position:absolute;left:1152px;top:339px;width:393px;height:3px;background:linear-gradient(90deg,#009438 0px,#02941e 197px,#209416 245px,#55940c 303px,#949301 357px,#946e00 391px,#946c00 393px)"></div><div style="position:absolute;left:1153px;top:342px;width:396px;height:3px;background:linear-gradient(90deg,#00943a 0px,#029420 196px,#219418 244px,#58940c 304px,#949202 354px,#946800 394px,#946700 396px)"></div><div style="position:absolute;left:1153px;top:345px;width:400px;height:3px;background:linear-gradient(90deg,#00943b 0px,#029421 196px,#259418 248px,#63940c 312px,#949204 352px,#946e00 384px,#946100 400px)"></div><div style="position:absolute;left:1153px;top:348px;width:404px;height:3px;background:linear-gradient(90deg,#00943d 0px,#029423 194px,#21941b 242px,#5a940f 302px,#949406 348px,#946e00 382px,#945c00 404px)"></div><div style="position:absolute;left:1154px;top:351px;width:407px;height:3px;background:linear-gradient(90deg,#00943e 0px,#029424 194px,#26941b 245px,#589411 297px,#949307 345px,#946900 383px,#945700 407px)"></div><div style="position:absolute;left:1154px;top:354px;width:411px;height:3px;background:linear-gradient(90deg,#00943f 0px,#029426 192px,#1f941f 235px,#4f9415 287px,#949309 343px,#946c01 377px,#945300 411px)"></div><div style="position:absolute;left:1155px;top:357px;width:414px;height:3px;background:linear-gradient(90deg,#009441 0px,#029428 190px,#219420 236px,#539416 288px,#94920a 340px,#946c02 374px,#944e00 414px)"></div><div style="position:absolute;left:1155px;top:360px;width:418px;height:3px;background:linear-gradient(90deg,#009442 0px,#029429 190px,#299420 244px,#639415 300px,#94920c 338px,#946f04 368px,#944c00 414px,#944a00 418px)"></div><div style="position:absolute;left:1156px;top:363px;width:421px;height:3px;background:linear-gradient(90deg,#009444 0px,#02942b 188px,#229423 233px,#5a9418 289px,#94940f 333px,#946e05 365px,#944a00 413px,#944600 421px)"></div><div style="position:absolute;left:1156px;top:366px;width:425px;height:3px;background:linear-gradient(90deg,#009446 0px,#02942d 188px,#2a9424 241px,#619419 293px,#949310 331px,#946906 367px,#944600 417px,#944200 425px)"></div><div style="position:absolute;left:1156px;top:369px;width:429px;height:3px;background:linear-gradient(90deg,#009447 0px,#01942f 186px,#269426 235px,#5c941c 287px,#949312 329px,#946e08 359px,#944b00 405px,#943e00 429px)"></div><div style="position:absolute;left:1157px;top:372px;width:432px;height:3px;background:linear-gradient(90deg,#009449 0px,#029431 184px,#20942a 226px,#529420 276px,#949215 326px,#946c09 358px,#944900 404px,#943b00 432px)"></div><div style="position:absolute;left:1157px;top:375px;width:436px;height:3px;background:linear-gradient(90deg,#00944b 0px,#029433 184px,#28942a 234px,#5e9420 284px,#949217 324px,#946d0b 354px,#944c02 396px,#943800 436px)"></div><div style="position:absolute;left:1158px;top:378px;width:439px;height:3px;background:linear-gradient(90deg,#00944c 0px,#029435 182px,#24942d 227px,#5c9423 279px,#94941a 319px,#946e0d 349px,#944c03 391px,#943400 439px)"></div><div style="position:absolute;left:1158px;top:381px;width:443px;height:3px;background:linear-gradient(90deg,#00944e 0px,#029437 182px,#27942f 229px,#619424 281px,#94931c 317px,#94690e 351px,#944703 397px,#943100 443px)"></div><div style="position:absolute;left:1159px;top:384px;width:446px;height:3px;background:linear-gradient(90deg,#009450 0px,#029439 180px,#289431 228px,#5e9427 276px,#94931e 314px,#946d11 344px,#944c06 384px,#942f00 444px,#942f00 446px)"></div><div style="position:absolute;left:1159px;top:387px;width:450px;height:3px;background:linear-gradient(90deg,#009452 0px,#01943c 178px,#249434 222px,#5b942a 272px,#949221 312px,#946c13 342px,#944a07 384px,#942d00 446px,#942c00 450px)"></div><div style="position:absolute;left:1160px;top:390px;width:452px;height:3px;background:linear-gradient(90deg,#009454 0px,#02943e 178px,#2a9435 226px,#5a942d 268px,#949324 308px,#946c15 338px,#944a08 380px,#942b00 446px,#942900 452px)"></div><div style="position:absolute;left:1161px;top:393px;width:455px;height:3px;background:linear-gradient(90deg,#009456 0px,#029440 176px,#269439 220px,#5a9430 265px,#949226 305px,#946b16 335px,#944909 377px,#942b00 441px,#942700 455px)"></div><div style="position:absolute;left:1161px;top:396px;width:459px;height:3px;background:linear-gradient(90deg,#009458 0px,#019443 174px,#29943b 222px,#629431 269px,#949229 303px,#94711b 327px,#944d0d 367px,#942d01 431px,#942400 459px)"></div><div style="position:absolute;left:1162px;top:399px;width:462px;height:3px;background:linear-gradient(90deg,#00945a 0px,#029445 172px,#22943f 212px,#579436 258px,#93942d 298px,#946c1b 328px,#944a0d 368px,#942d02 426px,#942200 462px)"></div><div style="position:absolute;left:1162px;top:402px;width:466px;height:3px;background:linear-gradient(90deg,#00945c 0px,#029448 172px,#259441 214px,#5c9438 260px,#949430 296px,#946d1e 324px,#944c0f 362px,#943004 414px,#942000 466px)"></div><div style="position:absolute;left:1163px;top:405px;width:469px;height:3px;background:linear-gradient(90deg,#00945e 0px,#02944a 170px,#219444 208px,#57943c 253px,#949333 293px,#946e21 319px,#944c11 357px,#942f05 413px,#941d00 469px)"></div><div style="position:absolute;left:1163px;top:408px;width:473px;height:3px;background:linear-gradient(90deg,#009460 0px,#02944d 170px,#269446 212px,#65943d 261px,#949236 291px,#946d24 317px,#944b13 355px,#942a04 421px,#941b00 473px)"></div><div style="position:absolute;left:1164px;top:411px;width:476px;height:3px;background:linear-gradient(90deg,#009463 0px,#029450 168px,#279449 210px,#5c9442 252px,#949239 288px,#946d26 314px,#944c15 350px,#942d07 408px,#941900 476px)"></div><div style="position:absolute;left:1165px;top:414px;width:479px;height:3px;background:linear-gradient(90deg,#009465 0px,#029453 166px,#23944d 204px,#5c9445 249px,#94943e 283px,#946e29 309px,#944c18 345px,#942c08 405px,#941700 479px)"></div><div style="position:absolute;left:1165px;top:417px;width:483px;height:3px;background:linear-gradient(90deg,#009468 0px,#029456 166px,#279450 206px,#5c9449 247px,#949341 281px,#946829 311px,#944616 351px,#942907 409px,#941600 483px)"></div><div style="position:absolute;left:1166px;top:420px;width:486px;height:3px;background:linear-gradient(90deg,#00946a 0px,#029459 164px,#2e9452 210px,#6b944a 254px,#949345 278px,#946f30 302px,#944f1e 334px,#94320d 384px,#941b02 452px,#941400 486px)"></div><div style="position:absolute;left:1166px;top:423px;width:490px;height:3px;background:linear-gradient(90deg,#00946d 0px,#02945c 162px,#229457 198px,#589450 240px,#949349 276px,#946930 304px,#94471b 342px,#942c0c 392px,#941400 478px,#941200 490px)"></div><div style="position:absolute;left:1167px;top:426px;width:493px;height:3px;background:linear-gradient(90deg,#00946f 0px,#019460 160px,#24945b 198px,#5c9454 240px,#93944e 271px,#946a34 299px,#94471e 337px,#942c0e 387px,#941400 473px,#941000 493px)"></div><div style="position:absolute;left:1168px;top:429px;width:496px;height:3px;background:linear-gradient(90deg,#009472 0px,#019463 158px,#27945e 198px,#619457 240px,#939452 268px,#946735 298px,#94451f 336px,#94260c 398px,#941000 488px,#940f00 496px)"></div><div style="position:absolute;left:1168px;top:432px;width:500px;height:3px;background:linear-gradient(90deg,#009475 0px,#029467 158px,#249462 194px,#61945c 238px,#949457 266px,#946b3b 292px,#944723 330px,#94280f 388px,#941101 476px,#940d00 500px)"></div><div style="position:absolute;left:1169px;top:435px;width:503px;height:3px;background:linear-gradient(90deg,#009478 0px,#01946b 156px,#2b9465 198px,#659460 238px,#94935a 263px,#946f41 285px,#944d2a 317px,#943116 363px,#941806 435px,#940c00 503px)"></div><div style="position:absolute;left:1170px;top:438px;width:506px;height:3px;background:linear-gradient(90deg,#00947b 0px,#01946e 154px,#27946a 192px,#619465 232px,#94935f 260px,#946e45 282px,#944a2a 318px,#942d16 366px,#941505 442px,#940a00 506px)"></div><div style="position:absolute;left:1171px;top:441px;width:509px;height:3px;background:linear-gradient(90deg,#00947e 0px,#029472 154px,#2c946e 194px,#659469 232px,#939465 255px,#946a46 281px,#94482c 315px,#942a16 367px,#941305 447px,#940900 509px)"></div><div style="position:absolute;left:1171px;top:444px;width:513px;height:3px;background:linear-gradient(90deg,#009481 0px,#029476 152px,#249473 186px,#5b946f 224px,#94946a 254px,#946f4d 275px,#944f35 303px,#94321d 347px,#941a0c 411px,#940900 507px,#940800 513px)"></div><div style="position:absolute;left:1172px;top:447px;width:516px;height:3px;background:linear-gradient(90deg,#009484 0px,#02947b 150px,#229478 182px,#619473 224px,#939470 250px,#946b4f 274px,#944b34 304px,#942d1c 352px,#94160a 422px,#940700 516px)"></div><div style="position:absolute;left:1173px;top:450px;width:519px;height:3px;background:linear-gradient(90deg,#009488 0px,#01947f 148px,#25947c 182px,#5e9479 220px,#949274 248px,#946c54 269px,#944c38 299px,#943223 337px,#94190e 403px,#940700 507px,#940500 519px)"></div><div style="position:absolute;left:1173px;top:453px;width:523px;height:3px;background:linear-gradient(90deg,#00948b 0px,#029484 148px,#249481 180px,#57947f 214px,#92947c 244px,#946b58 267px,#944c3c 295px,#942f23 339px,#94170e 405px,#940500 515px,#940400 523px)"></div><div style="position:absolute;left:1174px;top:456px;width:526px;height:3px;background:linear-gradient(90deg,#00948f 0px,#029489 146px,#229487 176px,#5d9484 214px,#949280 242px,#947161 260px,#944f43 288px,#943026 332px,#941811 396px,#940601 500px,#940300 526px)"></div><div style="position:absolute;left:1175px;top:459px;width:529px;height:3px;background:linear-gradient(90deg,#009493 0px,#01948e 144px,#25948c 176px,#5a948a 210px,#949488 238px,#946c62 260px,#944a42 289px,#942e27 331px,#941611 397px,#940602 495px,#940200 529px)"></div><div style="position:absolute;left:1176px;top:462px;width:532px;height:3px;background:linear-gradient(90deg,#009194 0px,#029493 142px,#209492 170px,#529490 202px,#8a948f 230px,#93948f 234px,#94726d 252px,#94514c 278px,#943632 312px,#941e1b 364px,#940b08 446px,#940100 532px)"></div><div style="position:absolute;left:1177px;top:465px;width:535px;height:3px;background:linear-gradient(90deg,#008e94 0px,#019094 140px,#229094 170px,#559194 202px,#8f9294 230px,#949294 232px,#947070 250px,#944f4f 275px,#943534 309px,#941d1c 361px,#940a08 447px,#940100 535px)"></div><div style="position:absolute;left:1177px;top:468px;width:539px;height:3px;background:linear-gradient(90deg,#008a94 0px,#028b94 140px,#208b94 168px,#588b94 204px,#938c94 232px,#94666b 254px,#94464a 281px,#942c2e 321px,#941616 381px,#940504 479px,#940000 539px)"></div><div style="position:absolute;left:1178px;top:471px;width:542px;height:3px;background:linear-gradient(90deg,#008694 0px,#028694 138px,#228694 168px,#578594 202px,#948493 232px,#94606a 254px,#94424a 282px,#94292e 322px,#941417 382px,#940405 478px,#940000 542px)"></div><div style="position:absolute;left:1179px;top:474px;width:545px;height:3px;background:linear-gradient(90deg,#008394 0px,#018194 136px,#238094 168px,#5b8094 204px,#947e93 232px,#945e6e 252px,#94424e 277px,#942a32 315px,#94151a 371px,#940507 465px,#940000 545px)"></div><div style="position:absolute;left:1180px;top:477px;width:548px;height:3px;background:linear-gradient(90deg,#007f94 0px,#017c94 134px,#257b94 168px,#5a7a94 202px,#927994 230px,#94586d 252px,#943d4c 280px,#942631 318px,#941219 376px,#940306 476px,#940000 548px)"></div><div style="position:absolute;left:1181px;top:480px;width:551px;height:3px;background:linear-gradient(90deg,#007c94 0px,#027894 134px,#247694 166px,#577594 200px,#937394 230px,#944f67 256px,#943547 285px,#941d29 333px,#940b12 405px,#940002 513px,#940000 551px)"></div><div style="position:absolute;left:1181px;top:483px;width:555px;height:3px;background:linear-gradient(90deg,#007894 0px,#017394 132px,#277194 168px,#576f94 200px,#946c92 232px,#944e6b 254px,#943348 285px,#941c2b 331px,#940b14 399px,#940003 505px,#940000 555px)"></div><div style="position:absolute;left:1182px;top:486px;width:558px;height:3px;background:linear-gradient(90deg,#007594 0px,#016f94 130px,#216d94 162px,#596a94 200px,#936894 230px,#94496a 254px,#942e46 288px,#941828 338px,#940812 410px,#940003 506px,#940000 558px)"></div><div style="position:absolute;left:1183px;top:489px;width:560px;height:3px;background:linear-gradient(90deg,#007194 0px,#026b94 130px,#286894 166px,#5e6594 202px,#946293 230px,#94466d 252px,#94304d 280px,#94192d 328px,#940916 394px,#940005 494px,#940000 560px)"></div><div style="position:absolute;left:1184px;top:492px;width:563px;height:3px;background:linear-gradient(90deg,#006e94 0px,#026794 128px,#246494 162px,#5b6094 200px,#945c93 230px,#94426d 252px,#942847 287px,#941429 337px,#940512 413px,#940004 505px,#940000 563px)"></div><div style="position:absolute;left:1185px;top:495px;width:566px;height:3px;background:linear-gradient(90deg,#006b94 0px,#026394 126px,#266094 162px,#5d5c94 200px,#925894 228px,#943c6a 254px,#942648 286px,#941229 338px,#940411 418px,#940005 502px,#940000 566px)"></div><div style="position:absolute;left:1186px;top:498px;width:569px;height:3px;background:linear-gradient(90deg,#006894 0px,#025f94 124px,#205c94 156px,#545894 194px,#925394 228px,#943767 256px,#941f41 295px,#940c22 357px,#94000d 443px,#940000 569px)"></div><div style="position:absolute;left:1187px;top:501px;width:572px;height:3px;background:linear-gradient(90deg,#006594 0px,#025b94 122px,#245894 158px,#5d5394 198px,#944e94 228px,#943971 248px,#942550 278px,#941534 318px,#94071b 380px,#94000a 464px,#940000 572px)"></div><div style="position:absolute;left:1187px;top:504px;width:574px;height:3px;background:linear-gradient(90deg,#006294 0px,#025894 122px,#225494 156px,#594f94 196px,#934a94 228px,#94326a 254px,#941e48 288px,#940d2a 340px,#940113 416px,#940002 542px,#940000 574px)"></div><div style="position:absolute;left:1188px;top:507px;width:569px;height:3px;background:linear-gradient(90deg,#005f94 0px,#025494 120px,#285094 160px,#5d4a94 198px,#934594 228px,#94306d 252px,#941b47 289px,#940c2c 337px,#940114 411px,#940002 545px,#940000 569px)"></div><div style="position:absolute;left:1189px;top:510px;width:560px;height:3px;background:linear-gradient(90deg,#005c94 0px,#025194 118px,#1f4d94 150px,#4d4894 186px,#824394 218px,#944093 228px,#942d6f 250px,#941c4d 282px,#940b2d 334px,#940116 406px,#940004 524px,#940001 560px)"></div><div style="position:absolute;left:1190px;top:513px;width:550px;height:3px;background:linear-gradient(90deg,#005994 0px,#014e94 116px,#294894 158px,#604294 198px,#943c92 228px,#94286c 252px,#94174a 286px,#94092d 336px,#940016 406px,#940004 530px,#940002 550px)"></div><div style="position:absolute;left:1191px;top:516px;width:541px;height:3px;background:linear-gradient(90deg,#005694 0px,#024a94 116px,#2a4594 158px,#643e94 200px,#943792 228px,#94256c 252px,#941346 291px,#940628 347px,#940014 419px,#940003 541px)"></div><div style="position:absolute;left:1192px;top:519px;width:531px;height:3px;background:linear-gradient(90deg,#005394 0px,#024794 114px,#254294 152px,#593b94 192px,#933594 226px,#942067 256px,#941145 293px,#94052a 343px,#940015 417px,#940004 531px)"></div><div style="position:absolute;left:1193px;top:522px;width:522px;height:3px;background:linear-gradient(90deg,#005094 0px,#024494 112px,#243f94 150px,#5b3894 192px,#943093 226px,#94206e 250px,#94114c 284px,#94062f 332px,#940019 400px,#940007 508px,#940005 522px)"></div><div style="position:absolute;left:1194px;top:525px;width:512px;height:3px;background:linear-gradient(90deg,#004e94 0px,#024194 110px,#213c94 146px,#5c3494 192px,#942c92 226px,#941c6b 252px,#940e49 288px,#940228 350px,#940010 444px,#940007 512px)"></div><div style="position:absolute;left:1195px;top:528px;width:503px;height:3px;background:linear-gradient(90deg,#004b94 0px,#023e94 108px,#203994 144px,#573194 188px,#942992 226px,#94196b 252px,#940c48 289px,#94012a 345px,#940012 435px,#940008 503px)"></div><div style="position:absolute;left:1196px;top:531px;width:493px;height:3px;background:linear-gradient(90deg,#004894 0px,#013c94 106px,#283594 150px,#612d94 194px,#932694 224px,#941669 253px,#940947 291px,#94012c 341px,#940014 425px,#940009 493px)"></div><div style="position:absolute;left:1197px;top:534px;width:484px;height:3px;background:linear-gradient(90deg,#004694 0px,#013994 104px,#233394 144px,#5d2a94 190px,#942293 224px,#94156f 248px,#94094b 286px,#94002c 342px,#940014 428px,#94000b 484px)"></div><div style="position:absolute;left:1198px;top:537px;width:474px;height:3px;background:linear-gradient(90deg,#004394 0px,#023694 104px,#272f94 146px,#5b2794 188px,#941f92 224px,#94116a 252px,#940647 292px,#940029 352px,#940013 434px,#94000c 474px)"></div><div style="position:absolute;left:1199px;top:540px;width:465px;height:3px;background:linear-gradient(90deg,#004194 0px,#023394 102px,#242d94 142px,#592594 186px,#941c92 224px,#94106d 249px,#94054a 287px,#94002c 343px,#940014 431px,#94000e 465px)"></div><div style="position:absolute;left:1201px;top:543px;width:454px;height:3px;background:linear-gradient(90deg,#003e94 0px,#013194 98px,#282994 144px,#622094 190px,#941992 222px,#940e6d 248px,#94044c 284px,#94002b 346px,#940014 432px,#940010 454px)"></div><div style="position:absolute;left:1202px;top:546px;width:444px;height:3px;background:linear-gradient(90deg,#003c94 0px,#022e94 98px,#262794 140px,#551f94 180px,#941692 222px,#940b6d 248px,#94034c 284px,#94002c 344px,#940013 438px,#940012 444px)"></div><div style="position:absolute;left:1203px;top:549px;width:435px;height:3px;background:linear-gradient(90deg,#003994 0px,#022c94 96px,#212694 134px,#501d94 176px,#8f1494 218px,#94128e 223px,#940867 253px,#940047 291px,#94002b 347px,#940014 435px)"></div><div style="position:absolute;left:1204px;top:552px;width:425px;height:3px;background:linear-gradient(90deg,#003794 0px,#022a94 94px,#222394 134px,#541a94 178px,#901194 217px,#941091 221px,#94076b 249px,#94004a 287px,#94002a 351px,#940016 425px)"></div><div style="position:absolute;left:1205px;top:555px;width:416px;height:3px;background:linear-gradient(90deg,#003494 0px,#022794 92px,#202194 130px,#4e1994 172px,#8e0f94 216px,#940d8f 222px,#940468 252px,#940047 292px,#94002a 352px,#940018 416px)"></div><div style="position:absolute;left:1206px;top:558px;width:406px;height:3px;background:linear-gradient(90deg,#003294 0px,#022594 90px,#1f1f94 128px,#4f1694 172px,#8f0c94 216px,#940a8f 222px,#94036c 248px,#94004a 288px,#94002b 350px,#94001b 406px)"></div><div style="position:absolute;left:1208px;top:561px;width:396px;height:3px;background:linear-gradient(90deg,#003094 0px,#022394 88px,#231c94 130px,#591294 178px,#940993 218px,#94026d 246px,#94004c 284px,#940030 336px,#94001d 396px)"></div><div style="position:absolute;left:1209px;top:564px;width:386px;height:3px;background:linear-gradient(90deg,#002e94 0px,#022194 86px,#1f1a94 124px,#4b1294 166px,#8c0894 212px,#940692 218px,#94016f 244px,#94004d 282px,#94002b 350px,#940020 386px)"></div><div style="position:absolute;left:1210px;top:567px;width:377px;height:3px;background:linear-gradient(90deg,#002b94 0px,#021f94 84px,#1e1894 122px,#4e0f94 168px,#940492 217px,#94006b 247px,#94004a 287px,#94002d 345px,#940023 377px)"></div><div style="position:absolute;left:1212px;top:570px;width:366px;height:3px;background:linear-gradient(90deg,#002994 0px,#021d94 82px,#241594 126px,#560c94 172px,#940292 216px,#94006b 246px,#940049 288px,#94002a 354px,#940026 366px)"></div><div style="position:absolute;left:1213px;top:573px;width:357px;height:3px;background:linear-gradient(90deg,#002794 0px,#021b94 80px,#211494 122px,#540a94 170px,#940192 215px,#94006c 245px,#94004c 283px,#94002e 343px,#940029 357px)"></div><div style="position:absolute;left:1214px;top:576px;width:347px;height:3px;background:linear-gradient(90deg,#002594 0px,#021994 78px,#201294 120px,#5a0794 174px,#940092 215px,#940070 241px,#94004f 279px,#940033 331px,#94002d 347px)"></div><div style="position:absolute;left:1216px;top:579px;width:337px;height:3px;background:linear-gradient(90deg,#002394 0px,#021794 76px,#211094 118px,#550694 168px,#940092 213px,#940068 247px,#940046 293px,#940031 337px)"></div><div style="position:absolute;left:1217px;top:582px;width:327px;height:3px;background:linear-gradient(90deg,#002194 0px,#021694 74px,#220e94 118px,#560494 167px,#940092 213px,#94006c 243px,#940048 289px,#940035 327px)"></div><div style="position:absolute;left:1219px;top:585px;width:317px;height:3px;background:linear-gradient(90deg,#001f94 0px,#021494 72px,#240c94 118px,#580294 167px,#940093 211px,#94006d 241px,#94004b 283px,#940039 317px)"></div><div style="position:absolute;left:1220px;top:588px;width:307px;height:3px;background:linear-gradient(90deg,#001d94 0px,#021294 70px,#230a94 116px,#590194 167px,#940092 211px,#94006d 241px,#94004b 283px,#94003e 307px)"></div><div style="position:absolute;left:1222px;top:591px;width:297px;height:3px;background:linear-gradient(90deg,#001b94 0px,#021094 68px,#270894 118px,#590094 165px,#940093 209px,#940070 237px,#940050 275px,#940043 297px)"></div><div style="position:absolute;left:1223px;top:594px;width:287px;height:3px;background:linear-gradient(90deg,#001994 0px,#020f94 66px,#230794 112px,#550094 161px,#940092 209px,#94006b 241px,#940049 287px)"></div><div style="position:absolute;left:1224px;top:597px;width:278px;height:3px;background:linear-gradient(90deg,#001794 0px,#020d94 64px,#260594 114px,#5e0094 168px,#940093 208px,#94006a 242px,#94004e 278px)"></div><div style="position:absolute;left:1226px;top:600px;width:267px;height:3px;background:linear-gradient(90deg,#001594 0px,#020c94 62px,#260394 112px,#560094 159px,#940092 207px,#940068 243px,#940055 267px)"></div><div style="position:absolute;left:1228px;top:603px;width:257px;height:3px;background:linear-gradient(90deg,#001394 0px,#020a94 58px,#210394 104px,#580094 159px,#940093 205px,#94006d 237px,#94005c 257px)"></div><div style="position:absolute;left:1229px;top:606px;width:247px;height:3px;background:linear-gradient(90deg,#001294 0px,#020994 58px,#290094 112px,#650094 169px,#940092 205px,#94006b 239px,#940064 247px)"></div><div style="position:absolute;left:1231px;top:609px;width:237px;height:3px;background:linear-gradient(90deg,#001094 0px,#020894 54px,#240094 104px,#620094 165px,#940093 203px,#94006e 235px,#94006c 237px)"></div><div style="position:absolute;left:1232px;top:612px;width:227px;height:3px;background:linear-gradient(90deg,#000e94 0px,#020694 52px,#230094 102px,#630094 165px,#940093 203px,#940075 227px)"></div><div style="position:absolute;left:1234px;top:615px;width:217px;height:3px;background:linear-gradient(90deg,#000c94 0px,#020594 50px,#250094 102px,#650094 165px,#940093 201px,#94007f 217px)"></div><div style="position:absolute;left:1236px;top:618px;width:206px;height:3px;background:linear-gradient(90deg,#000b94 0px,#020494 48px,#260094 100px,#580094 152px,#940093 200px,#94008b 206px)"></div><div style="position:absolute;left:1238px;top:621px;width:196px;height:3px;background:linear-gradient(90deg,#000994 0px,#020394 44px,#210094 92px,#580094 150px,#910094 196px)"></div><div style="position:absolute;left:1240px;top:624px;width:185px;height:3px;background:linear-gradient(90deg,#000794 0px,#020294 42px,#260094 95px,#5b0094 151px,#850094 185px)"></div><div style="position:absolute;left:1242px;top:627px;width:175px;height:3px;background:linear-gradient(90deg,#000694 0px,#030094 42px,#2b0094 99px,#600094 153px,#7a0094 175px)"></div><div style="position:absolute;left:1244px;top:630px;width:164px;height:3px;background:linear-gradient(90deg,#000494 0px,#020094 36px,#1f0094 82px,#550094 142px,#6e0094 164px)"></div><div style="position:absolute;left:1246px;top:633px;width:154px;height:3px;background:linear-gradient(90deg,#000394 0px,#030094 36px,#270094 90px,#5c0094 146px,#650094 154px)"></div><div style="position:absolute;left:1248px;top:636px;width:143px;height:3px;background:linear-gradient(90deg,#000294 0px,#030094 34px,#280094 89px,#5b0094 143px)"></div><div style="position:absolute;left:1250px;top:639px;width:133px;height:3px;background:linear-gradient(90deg,#000194 0px,#030094 30px,#220094 79px,#520094 133px)"></div><div style="position:absolute;left:1253px;top:642px;width:121px;height:3px;background:linear-gradient(90deg,#000094 0px,#030094 28px,#2b0094 87px,#490094 121px)"></div><div style="position:absolute;left:1256px;top:645px;width:110px;height:3px;background:linear-gradient(90deg,#000094 0px,#040094 26px,#2b0094 84px,#410094 110px)"></div><div style="position:absolute;left:1258px;top:648px;width:99px;height:3px;background:linear-gradient(90deg,#000094 0px,#030094 20px,#270094 77px,#390094 99px)"></div><div style="position:absolute;left:1262px;top:651px;width:86px;height:3px;background:linear-gradient(90deg,#000094 0px,#070094 24px,#300094 84px,#320094 86px)"></div><div style="position:absolute;left:1266px;top:654px;width:74px;height:3px;background:linear-gradient(90deg,#000094 0px,#0f0094 34px,#2c0094 74px)"></div><div style="position:absolute;left:1270px;top:657px;width:61px;height:3px;background:linear-gradient(90deg,#000094 0px,#200094 55px,#250094 61px)"></div><div style="position:absolute;left:1274px;top:660px;width:49px;height:3px;background:linear-gradient(90deg,#020094 0px,#1f0094 49px)"></div><div style="position:absolute;left:1279px;top:663px;width:35px;height:3px;background:linear-gradient(90deg,#050094 0px,#190094 35px)"></div><div style="position:absolute;left:1283px;top:666px;width:23px;height:3px;background:linear-gradient(90deg,#070094 0px,#140094 23px)"></div></div></div>
<div class="a" style="left:0;top:0;width:1920px;height:1040px;clip-path:polygon(1710.0px 471.4px, 1369.3px 240.9px, 1274.8px 633.4px)"><div class="a" style="left:0;top:0;width:1920px;height:1040px;filter:blur(1.3px)"><div style="position:absolute;left:1363px;top:238px;width:13px;height:3px;background:linear-gradient(90deg,#00ff01 0px,#03ff00 13px)"></div><div style="position:absolute;left:1362px;top:241px;width:18px;height:3px;background:linear-gradient(90deg,#00ff01 0px,#05ff00 16px,#06ff00 18px)"></div><div style="position:absolute;left:1361px;top:244px;width:24px;height:3px;background:linear-gradient(90deg,#00ff02 0px,#05ff00 16px,#0aff00 24px)"></div><div style="position:absolute;left:1361px;top:247px;width:28px;height:3px;background:linear-gradient(90deg,#00ff03 0px,#09ff00 22px,#0eff00 28px)"></div><div style="position:absolute;left:1360px;top:250px;width:34px;height:3px;background:linear-gradient(90deg,#00ff04 0px,#09ff00 22px,#12ff00 34px)"></div><div style="position:absolute;left:1359px;top:253px;width:39px;height:3px;background:linear-gradient(90deg,#00ff05 0px,#05ff02 16px,#17ff00 39px)"></div><div style="position:absolute;left:1358px;top:256px;width:45px;height:3px;background:linear-gradient(90deg,#00ff07 0px,#05ff03 16px,#1cff00 45px)"></div><div style="position:absolute;left:1358px;top:259px;width:49px;height:3px;background:linear-gradient(90deg,#00ff08 0px,#09ff03 22px,#20ff00 49px)"></div><div style="position:absolute;left:1357px;top:262px;width:54px;height:3px;background:linear-gradient(90deg,#00ff09 0px,#05ff06 16px,#25ff00 54px)"></div><div style="position:absolute;left:1356px;top:265px;width:60px;height:3px;background:linear-gradient(90deg,#00ff0a 0px,#05ff07 16px,#2bff00 60px)"></div><div style="position:absolute;left:1356px;top:268px;width:64px;height:3px;background:linear-gradient(90deg,#00ff0b 0px,#07ff07 18px,#30ff00 64px)"></div><div style="position:absolute;left:1355px;top:271px;width:70px;height:3px;background:linear-gradient(90deg,#00ff0d 0px,#07ff09 18px,#35ff00 68px,#37ff00 70px)"></div><div style="position:absolute;left:1354px;top:274px;width:75px;height:3px;background:linear-gradient(90deg,#00ff0e 0px,#05ff0b 16px,#34ff00 67px,#3cff00 75px)"></div><div style="position:absolute;left:1353px;top:277px;width:81px;height:3px;background:linear-gradient(90deg,#00ff10 0px,#04ff0d 14px,#2cff02 59px,#44ff00 81px)"></div><div style="position:absolute;left:1353px;top:280px;width:85px;height:3px;background:linear-gradient(90deg,#00ff11 0px,#07ff0d 18px,#33ff02 65px,#4aff00 85px)"></div><div style="position:absolute;left:1352px;top:283px;width:90px;height:3px;background:linear-gradient(90deg,#00ff13 0px,#07ff0e 18px,#3dff01 74px,#50ff00 90px)"></div><div style="position:absolute;left:1351px;top:286px;width:96px;height:3px;background:linear-gradient(90deg,#00ff14 0px,#04ff11 14px,#30ff05 62px,#59ff00 96px)"></div><div style="position:absolute;left:1351px;top:289px;width:100px;height:3px;background:linear-gradient(90deg,#00ff16 0px,#06ff12 16px,#38ff05 68px,#60ff00 100px)"></div><div style="position:absolute;left:1350px;top:292px;width:106px;height:3px;background:linear-gradient(90deg,#00ff17 0px,#06ff13 16px,#36ff07 66px,#69ff00 106px)"></div><div style="position:absolute;left:1349px;top:295px;width:111px;height:3px;background:linear-gradient(90deg,#00ff19 0px,#04ff16 14px,#38ff08 67px,#71ff00 111px)"></div><div style="position:absolute;left:1348px;top:298px;width:117px;height:3px;background:linear-gradient(90deg,#00ff1b 0px,#04ff17 14px,#36ff0a 65px,#7aff00 117px)"></div><div style="position:absolute;left:1348px;top:301px;width:121px;height:3px;background:linear-gradient(90deg,#00ff1c 0px,#06ff18 16px,#3aff0b 67px,#80ff00 119px,#83ff00 121px)"></div><div style="position:absolute;left:1347px;top:304px;width:127px;height:3px;background:linear-gradient(90deg,#00ff1e 0px,#06ff1a 16px,#38ff0d 65px,#7eff00 117px,#8dff00 127px)"></div><div style="position:absolute;left:1346px;top:307px;width:132px;height:3px;background:linear-gradient(90deg,#00ff20 0px,#03ff1d 12px,#2dff11 56px,#74ff03 110px,#97ff00 132px)"></div><div style="position:absolute;left:1345px;top:310px;width:137px;height:3px;background:linear-gradient(90deg,#00ff22 0px,#04ff1f 14px,#36ff11 64px,#83ff02 119px,#a1ff00 137px)"></div><div style="position:absolute;left:1345px;top:313px;width:142px;height:3px;background:linear-gradient(90deg,#00ff24 0px,#05ff20 14px,#31ff14 58px,#78ff06 110px,#adff00 142px)"></div><div style="position:absolute;left:1344px;top:316px;width:147px;height:3px;background:linear-gradient(90deg,#00ff26 0px,#06ff22 16px,#38ff15 64px,#81ff06 115px,#b8ff00 147px)"></div><div style="position:absolute;left:1343px;top:319px;width:153px;height:3px;background:linear-gradient(90deg,#00ff28 0px,#03ff25 12px,#31ff18 58px,#76ff0a 107px,#c5ff00 153px)"></div><div style="position:absolute;left:1343px;top:322px;width:157px;height:3px;background:linear-gradient(90deg,#00ff2a 0px,#05ff27 14px,#35ff1a 60px,#79ff0b 107px,#c9ff00 153px,#d1ff00 157px)"></div><div style="position:absolute;left:1342px;top:325px;width:163px;height:3px;background:linear-gradient(90deg,#00ff2d 0px,#05ff29 14px,#33ff1c 58px,#73ff0f 103px,#c4ff01 149px,#e0ff00 163px)"></div><div style="position:absolute;left:1341px;top:328px;width:168px;height:3px;background:linear-gradient(90deg,#00ff2f 0px,#05ff2b 14px,#31ff1f 56px,#75ff10 104px,#c4ff03 148px,#edff00 168px)"></div><div style="position:absolute;left:1340px;top:331px;width:173px;height:3px;background:linear-gradient(90deg,#00ff31 0px,#03ff2e 12px,#31ff21 56px,#72ff13 101px,#c8ff04 149px,#fbff00 173px)"></div><div style="position:absolute;left:1340px;top:334px;width:178px;height:3px;background:linear-gradient(90deg,#00ff33 0px,#05ff30 14px,#33ff23 56px,#79ff14 104px,#caff06 148px,#feff00 172px,#fff200 178px)"></div><div style="position:absolute;left:1339px;top:337px;width:183px;height:3px;background:linear-gradient(90deg,#00ff36 0px,#05ff32 14px,#33ff26 56px,#76ff18 101px,#cbff08 147px,#ffff01 171px,#ffe500 183px)"></div><div style="position:absolute;left:1338px;top:340px;width:189px;height:3px;background:linear-gradient(90deg,#00ff38 0px,#03ff35 12px,#2eff2a 52px,#77ff1a 101px,#c9ff0b 145px,#feff03 169px,#ffd700 189px)"></div><div style="position:absolute;left:1338px;top:343px;width:193px;height:3px;background:linear-gradient(90deg,#00ff3b 0px,#04ff37 12px,#2dff2c 50px,#70ff1e 96px,#c1ff0f 139px,#ffff05 167px,#ffcb00 193px)"></div><div style="position:absolute;left:1337px;top:346px;width:199px;height:3px;background:linear-gradient(90deg,#00ff3d 0px,#04ff3a 12px,#2dff2f 50px,#78ff1f 100px,#ccff10 143px,#feff08 165px,#ffc500 195px,#ffbf00 199px)"></div><div style="position:absolute;left:1336px;top:349px;width:204px;height:3px;background:linear-gradient(90deg,#00ff40 0px,#05ff3c 14px,#36ff30 56px,#7aff22 100px,#d0ff12 144px,#feff0b 164px,#ffc701 192px,#ffb400 204px)"></div><div style="position:absolute;left:1335px;top:352px;width:209px;height:3px;background:linear-gradient(90deg,#00ff43 0px,#03ff40 12px,#2eff35 50px,#70ff27 94px,#c4ff17 137px,#fffe0d 163px,#ffc602 191px,#ffab00 209px)"></div><div style="position:absolute;left:1335px;top:355px;width:214px;height:3px;background:linear-gradient(90deg,#00ff46 0px,#04ff42 12px,#2dff38 48px,#77ff28 96px,#d3ff17 142px,#feff11 160px,#ffc304 190px,#ffa000 214px)"></div><div style="position:absolute;left:1334px;top:358px;width:219px;height:3px;background:linear-gradient(90deg,#00ff49 0px,#04ff45 12px,#2dff3b 48px,#74ff2c 94px,#c7ff1d 135px,#ffff13 159px,#ffd009 181px,#ffa100 211px,#ff9700 219px)"></div><div style="position:absolute;left:1333px;top:361px;width:225px;height:3px;background:linear-gradient(90deg,#00ff4c 0px,#04ff48 12px,#2dff3e 48px,#6bff31 88px,#b8ff23 127px,#feff17 157px,#ffc90a 183px,#ff9c01 213px,#ff8e00 225px)"></div><div style="position:absolute;left:1332px;top:364px;width:230px;height:3px;background:linear-gradient(90deg,#00ff4f 0px,#02ff4c 10px,#28ff42 44px,#69ff35 86px,#b7ff26 126px,#feff1a 156px,#ffc80c 182px,#ff9801 214px,#ff8600 230px)"></div><div style="position:absolute;left:1332px;top:367px;width:235px;height:3px;background:linear-gradient(90deg,#00ff52 0px,#04ff4f 12px,#32ff43 50px,#6fff37 88px,#bfff28 127px,#fdff1e 153px,#ffc10d 183px,#ff9302 215px,#ff7e00 235px)"></div><div style="position:absolute;left:1331px;top:370px;width:240px;height:3px;background:linear-gradient(90deg,#00ff55 0px,#04ff52 12px,#2dff48 46px,#6dff3b 86px,#c3ff2b 128px,#fdff22 152px,#ffc411 180px,#ff9705 210px,#ff7700 240px)"></div><div style="position:absolute;left:1330px;top:373px;width:245px;height:3px;background:linear-gradient(90deg,#00ff59 0px,#04ff55 12px,#2dff4b 46px,#6aff3f 84px,#b2ff32 120px,#ffff25 151px,#ffcd17 173px,#ff9d09 203px,#ff7400 241px,#ff7000 245px)"></div><div style="position:absolute;left:1330px;top:376px;width:250px;height:3px;background:linear-gradient(90deg,#00ff5c 0px,#05ff59 12px,#2fff4f 46px,#6aff43 82px,#bcff34 122px,#fdff2a 148px,#ffc317 176px,#ff9309 208px,#ff6b00 248px,#ff6900 250px)"></div><div style="position:absolute;left:1329px;top:379px;width:255px;height:3px;background:linear-gradient(90deg,#00ff60 0px,#04ff5c 12px,#2fff52 46px,#72ff45 86px,#beff38 122px,#ffff2e 147px,#ffc91c 171px,#ff9c0e 199px,#ff7402 235px,#ff6300 255px)"></div><div style="position:absolute;left:1328px;top:382px;width:261px;height:3px;background:linear-gradient(90deg,#00ff63 0px,#04ff60 12px,#32ff55 48px,#73ff49 86px,#c5ff3b 124px,#fdff32 145px,#ffc91f 169px,#ff990f 199px,#ff7304 233px,#ff5d00 261px)"></div><div style="position:absolute;left:1327px;top:385px;width:266px;height:3px;background:linear-gradient(90deg,#00ff67 0px,#02ff64 10px,#27ff5c 40px,#62ff50 76px,#b1ff43 114px,#fdff37 144px,#ffc521 170px,#ff9511 200px,#ff6903 242px,#ff5700 266px)"></div><div style="position:absolute;left:1327px;top:388px;width:271px;height:3px;background:linear-gradient(90deg,#00ff6b 0px,#05ff67 12px,#2eff5e 44px,#70ff52 82px,#baff46 116px,#fdff3b 141px,#ffc525 167px,#ff9a16 193px,#ff7007 231px,#ff5100 271px)"></div><div style="position:absolute;left:1326px;top:391px;width:276px;height:3px;background:linear-gradient(90deg,#00ff6f 0px,#05ff6c 12px,#29ff64 40px,#66ff58 76px,#b4ff4b 112px,#fdff40 140px,#ffc027 168px,#ff9115 198px,#ff6706 238px,#ff4c00 276px)"></div><div style="position:absolute;left:1325px;top:394px;width:282px;height:3px;background:linear-gradient(90deg,#00ff73 0px,#04ff70 12px,#32ff66 46px,#77ff5a 84px,#cfff4c 122px,#fffe44 140px,#ffd132 158px,#ffa21f 184px,#ff780e 218px,#ff5302 262px,#ff4700 282px)"></div><div style="position:absolute;left:1325px;top:397px;width:286px;height:3px;background:linear-gradient(90deg,#00ff77 0px,#05ff74 12px,#37ff6a 48px,#7fff5d 86px,#d0ff51 120px,#fcff4a 136px,#ffe23d 148px,#ffb42a 170px,#ff8316 204px,#ff5a06 248px,#ff4200 286px)"></div><div style="position:absolute;left:1324px;top:400px;width:291px;height:3px;background:linear-gradient(90deg,#00ff7b 0px,#03ff79 10px,#25ff72 36px,#5fff67 70px,#aeff5b 106px,#ffff4f 136px,#ffcd39 155px,#ff9f24 181px,#ff7914 211px,#ff5606 251px,#ff3e00 291px)"></div><div style="position:absolute;left:1323px;top:403px;width:297px;height:3px;background:linear-gradient(90deg,#00ff80 0px,#05ff7d 12px,#31ff74 44px,#79ff68 82px,#caff5c 116px,#fdff55 134px,#ffc138 159px,#ff9022 189px,#ff6910 225px,#ff4703 271px,#ff3a00 297px)"></div><div style="position:absolute;left:1322px;top:406px;width:302px;height:3px;background:linear-gradient(90deg,#00ff85 0px,#04ff82 12px,#35ff78 46px,#7bff6d 82px,#c9ff62 114px,#fcff5b 132px,#ffe14c 144px,#ffb537 164px,#ff821f 198px,#ff5a0d 240px,#ff3700 298px,#ff3600 302px)"></div><div style="position:absolute;left:1322px;top:409px;width:307px;height:3px;background:linear-gradient(90deg,#00ff89 0px,#05ff86 12px,#30ff7e 42px,#7aff73 80px,#c8ff68 112px,#fcff61 130px,#ffe553 140px,#ffb139 163px,#ff8423 193px,#ff5c10 233px,#ff3901 289px,#ff3100 307px)"></div><div style="position:absolute;left:1321px;top:412px;width:312px;height:3px;background:linear-gradient(90deg,#00ff8e 0px,#05ff8b 12px,#34ff83 44px,#7cff78 80px,#c7ff6e 110px,#fbff67 128px,#fff662 132px,#ffc448 152px,#ff9630 178px,#ff6b1a 214px,#ff490a 258px,#ff2e00 312px)"></div><div style="position:absolute;left:1320px;top:415px;width:318px;height:3px;background:linear-gradient(90deg,#00ff93 0px,#05ff90 12px,#38ff88 46px,#7eff7d 80px,#d0ff73 112px,#fffe6c 128px,#ffc94f 148px,#ff9935 174px,#ff6c1e 210px,#ff470b 258px,#ff2a00 318px)"></div><div style="position:absolute;left:1319px;top:418px;width:323px;height:3px;background:linear-gradient(90deg,#00ff98 0px,#02ff96 10px,#27ff90 36px,#68ff86 70px,#b6ff7c 102px,#fdff74 126px,#ffc251 150px,#ff9135 177px,#ff6d21 207px,#ff4a0f 249px,#ff2a00 313px,#ff2700 323px)"></div><div style="position:absolute;left:1319px;top:421px;width:327px;height:3px;background:linear-gradient(90deg,#00ff9e 0px,#03ff9b 10px,#30ff94 40px,#6cff8c 70px,#bcff82 102px,#feff7a 124px,#ffc95b 144px,#ff983e 169px,#ff6b24 205px,#ff4610 251px,#ff2600 319px,#ff2300 327px)"></div><div style="position:absolute;left:1318px;top:424px;width:333px;height:3px;background:linear-gradient(90deg,#00ffa3 0px,#05ffa1 12px,#34ff9a 42px,#7bff90 76px,#cbff87 106px,#fcff82 122px,#ffef78 128px,#ffbd59 148px,#ff8f3d 173px,#ff6625 207px,#ff410f 257px,#ff2501 317px,#ff2000 333px)"></div><div style="position:absolute;left:1317px;top:427px;width:338px;height:3px;background:linear-gradient(90deg,#00ffa9 0px,#05ffa7 12px,#31ffa0 40px,#6fff98 70px,#c3ff8f 102px,#fbff89 120px,#fff683 124px,#ffc564 142px,#ff9747 166px,#ff6b2b 200px,#ff4715 244px,#ff2603 310px,#ff1d00 338px)"></div><div style="position:absolute;left:1317px;top:430px;width:343px;height:3px;background:linear-gradient(90deg,#00ffaf 0px,#04ffad 10px,#28ffa8 34px,#6eff9f 68px,#bdff97 98px,#fbff91 118px,#fff68a 122px,#ffc569 140px,#ff9d4f 160px,#ff7536 187px,#ff511e 225px,#ff2e09 285px,#ff1a00 343px)"></div><div style="position:absolute;left:1316px;top:433px;width:348px;height:3px;background:linear-gradient(90deg,#00ffb5 0px,#03ffb3 10px,#2cffae 36px,#70ffa6 68px,#bbff9f 96px,#fffd97 118px,#ffc470 138px,#ff924d 164px,#ff6730 198px,#ff4319 242px,#ff2204 312px,#ff1700 348px)"></div><div style="position:absolute;left:1315px;top:436px;width:354px;height:3px;background:linear-gradient(90deg,#00ffbc 0px,#03ffba 10px,#2cffb5 36px,#6dffae 66px,#b8ffa7 94px,#ffffa0 116px,#ffcf7e 132px,#ffa35f 152px,#ff763f 182px,#ff5226 218px,#ff300f 274px,#ff1600 348px,#ff1500 354px)"></div><div style="position:absolute;left:1314px;top:439px;width:359px;height:3px;background:linear-gradient(90deg,#00ffc2 0px,#05ffc0 12px,#38ffba 42px,#82ffb3 74px,#d3ffac 102px,#fcffa9 114px,#ffe293 124px,#ffb06e 144px,#ff834d 170px,#ff5c31 203px,#ff3a18 251px,#ff1e06 315px,#ff1200 359px)"></div><div style="position:absolute;left:1314px;top:442px;width:363px;height:3px;background:linear-gradient(90deg,#00ffc9 0px,#04ffc7 10px,#2bffc3 34px,#6dffbd 64px,#b5ffb7 90px,#fdffb2 112px,#ffc585 132px,#ff9b65 152px,#ff7245 180px,#ff4a27 221px,#ff2b11 275px,#ff1200 353px,#ff1000 363px)"></div><div style="position:absolute;left:1313px;top:445px;width:369px;height:3px;background:linear-gradient(90deg,#00ffd0 0px,#03ffcf 10px,#2fffca 36px,#6fffc5 64px,#beffbf 92px,#fbffbb 110px,#fff5b2 114px,#ffc68d 130px,#ff9768 152px,#ff6f48 180px,#ff492a 219px,#ff2a12 275px,#ff1101 351px,#ff0d00 369px)"></div><div style="position:absolute;left:1312px;top:448px;width:374px;height:3px;background:linear-gradient(90deg,#00ffd7 0px,#03ffd6 10px,#28ffd3 32px,#66ffce 60px,#b6ffc9 88px,#fffdc2 110px,#ffcb99 126px,#ff9e74 146px,#ff7552 172px,#ff4e32 210px,#ff2d17 264px,#ff1304 338px,#ff0b00 374px)"></div><div style="position:absolute;left:1312px;top:451px;width:379px;height:3px;background:linear-gradient(90deg,#00ffdf 0px,#04ffde 10px,#32ffda 36px,#6fffd6 62px,#c2ffd1 90px,#fffdcc 108px,#ffcfa5 122px,#ffa17d 142px,#ff795b 166px,#ff543b 199px,#ff3420 245px,#ff180a 313px,#ff0900 379px)"></div><div style="position:absolute;left:1311px;top:454px;width:384px;height:3px;background:linear-gradient(90deg,#00ffe7 0px,#04ffe6 10px,#2affe3 32px,#6cffe0 60px,#c0ffdb 88px,#fffed7 106px,#ffd0ae 120px,#ffa487 138px,#ff7860 164px,#ff5440 196px,#ff3424 242px,#ff190d 306px,#ff0800 382px,#ff0700 384px)"></div><div style="position:absolute;left:1310px;top:457px;width:390px;height:3px;background:linear-gradient(90deg,#00ffef 0px,#04ffee 10px,#2bffec 32px,#68ffe9 58px,#b6ffe6 84px,#feffe3 104px,#ffc5ad 122px,#ff9480 144px,#ff6d5c 170px,#ff4b3c 204px,#ff2d21 252px,#ff140a 320px,#ff0500 390px)"></div><div style="position:absolute;left:1309px;top:460px;width:395px;height:3px;background:linear-gradient(90deg,#00fff8 0px,#03fff7 10px,#33fff5 36px,#80fff2 66px,#d5ffef 92px,#fbffee 102px,#fff4e4 106px,#ffc7b8 120px,#ff998c 140px,#ff7569 162px,#ff5147 194px,#ff2f26 243px,#ff150e 309px,#ff0400 393px,#ff0400 395px)"></div><div style="position:absolute;left:1309px;top:463px;width:400px;height:3px;background:linear-gradient(90deg,#00fdff 0px,#04feff 10px,#36fffe 36px,#80fffd 64px,#d6fffb 90px,#fdfffa 100px,#ffc4bf 118px,#ff9a95 136px,#ff726d 160px,#ff4c46 196px,#ff2c27 244px,#ff120e 314px,#ff0200 396px,#ff0200 400px)"></div><div style="position:absolute;left:1308px;top:466px;width:405px;height:3px;background:linear-gradient(90deg,#00f5ff 0px,#04f5ff 10px,#30f6ff 34px,#78f7ff 62px,#c5f8ff 86px,#fbf8ff 100px,#ffedf3 104px,#ffbbbf 120px,#ff8f91 140px,#ff6566 168px,#ff4343 203px,#ff2624 253px,#ff0f0d 321px,#ff0100 403px,#ff0100 405px)"></div><div style="position:absolute;left:1307px;top:469px;width:408px;height:3px;background:linear-gradient(90deg,#00ecff 0px,#03ecff 10px,#2fecff 34px,#75edff 62px,#c2edff 86px,#feedff 102px,#ffbbc9 118px,#ff929d 136px,#ff6c74 160px,#ff4a4f 192px,#ff2c2f 236px,#ff1314 300px,#ff0101 392px,#ff0000 408px)"></div><div style="position:absolute;left:1306px;top:472px;width:409px;height:3px;background:linear-gradient(90deg,#00e4ff 0px,#03e4ff 10px,#2ee3ff 34px,#67e3ff 58px,#b5e2ff 84px,#ffe2ff 104px,#ffb2c9 120px,#ff8799 140px,#ff616f 166px,#ff3e47 204px,#ff2228 253px,#ff0c0f 321px,#ff0000 409px)"></div><div style="position:absolute;left:1306px;top:475px;width:401px;height:3px;background:linear-gradient(90deg,#00dcff 0px,#04dbff 10px,#2edbff 34px,#72d9ff 62px,#c2d8ff 88px,#fdd7ff 104px,#ffa1c0 124px,#ff7b94 144px,#ff5b6e 168px,#ff3c4a 201px,#ff212a 251px,#ff0c11 317px,#ff0001 399px,#ff0001 401px)"></div><div style="position:absolute;left:1305px;top:478px;width:394px;height:3px;background:linear-gradient(90deg,#00d4ff 0px,#04d3ff 10px,#29d2ff 32px,#65d1ff 58px,#b1cfff 84px,#ffccfe 106px,#ffa1c9 122px,#ff7d9f 140px,#ff5e79 162px,#ff4155 192px,#ff2533 238px,#ff0f18 298px,#ff0004 388px,#ff0003 394px)"></div><div style="position:absolute;left:1304px;top:481px;width:387px;height:3px;background:linear-gradient(90deg,#00ccff 0px,#03ccff 10px,#28caff 32px,#63c8ff 58px,#acc5ff 84px,#ffc1fd 108px,#ff98ca 124px,#ff739b 144px,#ff4e6c 174px,#ff3248 209px,#ff1827 263px,#ff040d 343px,#ff0004 387px)"></div><div style="position:absolute;left:1304px;top:484px;width:379px;height:3px;background:linear-gradient(90deg,#00c5ff 0px,#04c4ff 10px,#29c2ff 32px,#63bfff 58px,#9fbdff 80px,#feb9ff 108px,#ff96d1 122px,#ff71a1 142px,#ff5076 168px,#ff3652 199px,#ff1d32 245px,#ff0a18 305px,#ff0006 379px)"></div><div style="position:absolute;left:1303px;top:487px;width:372px;height:3px;background:linear-gradient(90deg,#00beff 0px,#04bdff 10px,#28baff 32px,#61b7ff 58px,#a9b4ff 84px,#ffaefd 110px,#ff88ca 126px,#ff679c 146px,#ff4770 174px,#ff2a48 214px,#ff1227 270px,#ff020e 346px,#ff0009 372px)"></div><div style="position:absolute;left:1302px;top:490px;width:365px;height:3px;background:linear-gradient(90deg,#00b7ff 0px,#03b6ff 10px,#32b2ff 38px,#77aeff 68px,#caa9ff 96px,#fba7ff 110px,#ff9ff5 114px,#ff7dc5 130px,#ff5f99 150px,#ff416f 178px,#ff284b 213px,#ff122b 265px,#ff0110 341px,#ff000b 365px)"></div><div style="position:absolute;left:1301px;top:493px;width:357px;height:3px;background:linear-gradient(90deg,#00b0ff 0px,#03afff 10px,#29acff 34px,#66a7ff 62px,#ada3ff 88px,#fc9eff 112px,#ff84da 124px,#ff66ad 142px,#ff477f 168px,#ff2d58 201px,#ff1736 247px,#ff051a 311px,#ff000e 357px)"></div><div style="position:absolute;left:1301px;top:496px;width:349px;height:3px;background:linear-gradient(90deg,#00aaff 0px,#04a8ff 10px,#2aa5ff 34px,#66a0ff 62px,#ac9bff 88px,#fa95ff 112px,#ff8ef5 116px,#ff69bc 136px,#ff498a 162px,#ff2e5f 195px,#ff183c 239px,#ff051c 307px,#ff0010 349px)"></div><div style="position:absolute;left:1300px;top:499px;width:342px;height:3px;background:linear-gradient(90deg,#00a3ff 0px,#03a2ff 10px,#2d9dff 36px,#6998ff 64px,#b592ff 92px,#fd8dff 114px,#ff68c5 134px,#ff4c97 156px,#ff336e 184px,#ff1d4a 222px,#ff0a2a 276px,#ff0013 342px)"></div><div style="position:absolute;left:1299px;top:502px;width:335px;height:3px;background:linear-gradient(90deg,#009dff 0px,#059bff 12px,#3396ff 40px,#7090ff 68px,#c289ff 98px,#fe84ff 116px,#ff62c5 136px,#ff499b 156px,#ff2f6f 185px,#ff1a4b 223px,#ff0728 283px,#ff0016 335px)"></div><div style="position:absolute;left:1299px;top:505px;width:327px;height:3px;background:linear-gradient(90deg,#0097ff 0px,#0495ff 10px,#2891ff 34px,#6b8aff 66px,#bb82ff 96px,#fc7dff 116px,#ff68dc 128px,#ff4dac 148px,#ff3480 173px,#ff1d56 211px,#ff0b34 261px,#ff001a 325px,#ff0019 327px)"></div><div style="position:absolute;left:1298px;top:508px;width:320px;height:3px;background:linear-gradient(90deg,#0091ff 0px,#038fff 10px,#2f8aff 38px,#6e83ff 68px,#be7bff 98px,#ff75ff 118px,#ff58ca 136px,#ff3d98 160px,#ff256c 192px,#ff1248 232px,#ff0327 292px,#ff001d 320px)"></div><div style="position:absolute;left:1297px;top:511px;width:313px;height:3px;background:linear-gradient(90deg,#008cff 0px,#0589ff 12px,#3183ff 40px,#707cff 70px,#ba74ff 98px,#ff6dff 120px,#ff57d5 134px,#ff40a8 154px,#ff2a7e 179px,#ff1552 221px,#ff032d 281px,#ff0021 313px)"></div><div style="position:absolute;left:1296px;top:514px;width:306px;height:3px;background:linear-gradient(90deg,#0086ff 0px,#0584ff 12px,#297eff 36px,#6577ff 66px,#b76eff 98px,#fb67ff 120px,#ff61f5 124px,#ff46bf 144px,#ff3092 168px,#ff1d6b 198px,#ff0c46 240px,#ff0026 302px,#ff0024 306px)"></div><div style="position:absolute;left:1296px;top:517px;width:298px;height:3px;background:linear-gradient(90deg,#0080ff 0px,#037eff 10px,#2d78ff 38px,#736fff 72px,#bc67ff 100px,#ff5ffe 122px,#ff46ca 140px,#ff2f9a 164px,#ff1d73 192px,#ff0c4d 232px,#ff0029 296px,#ff0029 298px)"></div><div style="position:absolute;left:1295px;top:520px;width:291px;height:3px;background:linear-gradient(90deg,#007bff 0px,#0379ff 10px,#2573ff 34px,#676aff 68px,#b761ff 100px,#ff58fd 124px,#ff3fc6 144px,#ff2894 169px,#ff1569 203px,#ff0746 245px,#ff002d 291px)"></div><div style="position:absolute;left:1294px;top:523px;width:284px;height:3px;background:linear-gradient(90deg,#0076ff 0px,#0573ff 12px,#326cff 42px,#7c62ff 78px,#d157ff 110px,#fd52ff 124px,#ff37c0 148px,#ff2494 172px,#ff146d 202px,#ff064a 242px,#ff0032 284px)"></div><div style="position:absolute;left:1293px;top:526px;width:277px;height:3px;background:linear-gradient(90deg,#0071ff 0px,#026fff 10px,#2d67ff 40px,#705eff 74px,#bb54ff 104px,#fd4cff 126px,#ff34c5 147px,#ff239b 169px,#ff1270 201px,#ff044b 243px,#ff0037 277px)"></div><div style="position:absolute;left:1293px;top:529px;width:269px;height:3px;background:linear-gradient(90deg,#006cff 0px,#036aff 10px,#3162ff 42px,#7957ff 78px,#cb4cff 110px,#fb46ff 126px,#ff42f6 130px,#ff2ec2 149px,#ff1c93 175px,#ff0c69 209px,#ff0146 253px,#ff003c 269px)"></div><div style="position:absolute;left:1292px;top:532px;width:262px;height:3px;background:linear-gradient(90deg,#0068ff 0px,#0565ff 12px,#305dff 42px,#7c51ff 80px,#ce46ff 112px,#fe40ff 128px,#ff2cca 148px,#ff1c9f 170px,#ff0e78 198px,#ff0252 238px,#ff0042 262px)"></div><div style="position:absolute;left:1291px;top:535px;width:255px;height:3px;background:linear-gradient(90deg,#0063ff 0px,#0560ff 12px,#2c58ff 40px,#6c4eff 74px,#b943ff 106px,#fe3aff 129px,#ff26c6 151px,#ff1699 175px,#ff086c 211px,#ff004a 253px,#ff0048 255px)"></div><div style="position:absolute;left:1291px;top:538px;width:247px;height:3px;background:linear-gradient(90deg,#005eff 0px,#055bff 12px,#3652ff 46px,#8246ff 84px,#c83cff 112px,#fd35ff 129px,#ff20c3 153px,#ff1092 181px,#ff0469 215px,#ff004f 247px)"></div><div style="position:absolute;left:1290px;top:541px;width:240px;height:3px;background:linear-gradient(90deg,#005aff 0px,#0557ff 12px,#2f4eff 42px,#7343ff 78px,#c038ff 110px,#ff2ffe 132px,#ff1eca 152px,#ff109d 176px,#ff0573 208px,#ff0056 240px)"></div><div style="position:absolute;left:1289px;top:544px;width:232px;height:3px;background:linear-gradient(90deg,#0056ff 0px,#0553ff 12px,#2e4aff 42px,#6d3fff 76px,#b834ff 108px,#ff29fd 134px,#ff1ac9 154px,#ff0c9a 180px,#ff016f 214px,#ff005f 232px)"></div><div style="position:absolute;left:1288px;top:547px;width:225px;height:3px;background:linear-gradient(90deg,#0052ff 0px,#024fff 10px,#2647ff 38px,#6a3bff 76px,#b82fff 110px,#ff24fd 135px,#ff15c6 157px,#ff0998 183px,#ff0071 215px,#ff0067 225px)"></div><div style="position:absolute;left:1288px;top:550px;width:217px;height:3px;background:linear-gradient(90deg,#004dff 0px,#054aff 12px,#3041ff 44px,#6e36ff 78px,#bd29ff 111px,#ff20ff 135px,#ff14d0 153px,#ff08a3 177px,#ff0078 209px,#ff0070 217px)"></div><div style="position:absolute;left:1287px;top:553px;width:210px;height:3px;background:linear-gradient(90deg,#004aff 0px,#0546ff 12px,#293eff 40px,#6d32ff 78px,#bb25ff 112px,#fc1cff 136px,#ff14e1 148px,#ff09b2 170px,#ff0085 200px,#ff007a 210px)"></div><div style="position:absolute;left:1286px;top:556px;width:203px;height:3px;background:linear-gradient(90deg,#0046ff 0px,#0442ff 12px,#2e39ff 44px,#6b2eff 78px,#b122ff 109px,#fc17ff 137px,#ff10e2 149px,#ff05ac 175px,#ff0084 203px)"></div><div style="position:absolute;left:1286px;top:559px;width:195px;height:3px;background:linear-gradient(90deg,#0042ff 0px,#053eff 12px,#2f35ff 44px,#6b2aff 78px,#ac1fff 107px,#ff12fe 139px,#ff08cc 159px,#ff009b 187px,#ff0090 195px)"></div><div style="position:absolute;left:1285px;top:562px;width:188px;height:3px;background:linear-gradient(90deg,#003eff 0px,#053bff 12px,#2e31ff 44px,#7524ff 84px,#c217ff 118px,#fe0fff 140px,#ff04c6 164px,#ff009d 188px)"></div><div style="position:absolute;left:1284px;top:565px;width:181px;height:3px;background:linear-gradient(90deg,#003bff 0px,#0437ff 12px,#332dff 48px,#6f21ff 82px,#b416ff 113px,#fd0bff 141px,#ff01c3 167px,#ff00aa 181px)"></div><div style="position:absolute;left:1283px;top:568px;width:174px;height:3px;background:linear-gradient(90deg,#0037ff 0px,#0235ff 10px,#272cff 40px,#5e20ff 74px,#a914ff 110px,#ff07fe 144px,#ff00d1 162px,#ff00ba 174px)"></div><div style="position:absolute;left:1283px;top:571px;width:166px;height:3px;background:linear-gradient(90deg,#0034ff 0px,#0530ff 12px,#2a27ff 42px,#6a1bff 80px,#b20fff 114px,#ff04ff 144px,#ff00ca 166px)"></div><div style="position:absolute;left:1282px;top:574px;width:159px;height:3px;background:linear-gradient(90deg,#0031ff 0px,#042dff 12px,#2f23ff 46px,#6b17ff 81px,#b20bff 115px,#fe01ff 145px,#ff00dd 159px)"></div><div style="position:absolute;left:1281px;top:577px;width:152px;height:3px;background:linear-gradient(90deg,#002dff 0px,#042aff 12px,#2e20ff 46px,#6e13ff 84px,#ba07ff 120px,#fc00ff 146px,#ff00f2 152px)"></div><div style="position:absolute;left:1280px;top:580px;width:145px;height:3px;background:linear-gradient(90deg,#002aff 0px,#0228ff 10px,#271eff 42px,#6711ff 81px,#b504ff 119px,#f500ff 145px)"></div><div style="position:absolute;left:1280px;top:583px;width:137px;height:3px;background:linear-gradient(90deg,#0027ff 0px,#0424ff 12px,#3318ff 50px,#720cff 87px,#c200ff 125px,#df00ff 137px)"></div><div style="position:absolute;left:1279px;top:586px;width:130px;height:3px;background:linear-gradient(90deg,#0024ff 0px,#0421ff 12px,#2d17ff 46px,#6a0bff 84px,#b800ff 122px,#cb00ff 130px)"></div><div style="position:absolute;left:1278px;top:589px;width:123px;height:3px;background:linear-gradient(90deg,#0021ff 0px,#021fff 10px,#2615ff 42px,#6708ff 83px,#b700ff 123px)"></div><div style="position:absolute;left:1278px;top:592px;width:115px;height:3px;background:linear-gradient(90deg,#001eff 0px,#041bff 12px,#2c11ff 46px,#6b05ff 85px,#a500ff 115px)"></div><div style="position:absolute;left:1277px;top:595px;width:107px;height:3px;background:linear-gradient(90deg,#001cff 0px,#0418ff 12px,#2e0eff 48px,#7002ff 89px,#9200ff 107px)"></div><div style="position:absolute;left:1276px;top:598px;width:100px;height:3px;background:linear-gradient(90deg,#0019ff 0px,#0416ff 12px,#2b0cff 46px,#6901ff 86px,#8300ff 100px)"></div><div style="position:absolute;left:1275px;top:601px;width:93px;height:3px;background:linear-gradient(90deg,#0017ff 0px,#0313ff 12px,#2c09ff 47px,#7000ff 91px,#7400ff 93px)"></div><div style="position:absolute;left:1275px;top:604px;width:85px;height:3px;background:linear-gradient(90deg,#0014ff 0px,#0411ff 12px,#2a07ff 45px,#6600ff 85px)"></div><div style="position:absolute;left:1274px;top:607px;width:78px;height:3px;background:linear-gradient(90deg,#0012ff 0px,#040eff 12px,#2c05ff 48px,#5900ff 78px)"></div><div style="position:absolute;left:1273px;top:610px;width:71px;height:3px;background:linear-gradient(90deg,#000fff 0px,#030cff 12px,#2d02ff 49px,#4c00ff 71px)"></div><div style="position:absolute;left:1273px;top:613px;width:63px;height:3px;background:linear-gradient(90deg,#000dff 0px,#040aff 12px,#3000ff 51px,#4100ff 63px)"></div><div style="position:absolute;left:1272px;top:616px;width:56px;height:3px;background:linear-gradient(90deg,#000bff 0px,#0408ff 12px,#2e00ff 50px,#3600ff 56px)"></div><div style="position:absolute;left:1271px;top:619px;width:49px;height:3px;background:linear-gradient(90deg,#0009ff 0px,#0306ff 12px,#2c00ff 49px)"></div><div style="position:absolute;left:1270px;top:622px;width:42px;height:3px;background:linear-gradient(90deg,#0007ff 0px,#0304ff 12px,#2200ff 42px)"></div><div style="position:absolute;left:1270px;top:625px;width:34px;height:3px;background:linear-gradient(90deg,#0005ff 0px,#0402ff 12px,#1a00ff 34px)"></div><div style="position:absolute;left:1269px;top:628px;width:27px;height:3px;background:linear-gradient(90deg,#0003ff 0px,#0301ff 12px,#1200ff 27px)"></div><div style="position:absolute;left:1269px;top:631px;width:19px;height:3px;background:linear-gradient(90deg,#0001ff 0px,#0500ff 13px,#0a00ff 19px)"></div></div></div>
<svg class="a" style="left:0;top:0" width="1920" height="1040"><defs><linearGradient id="wg0" gradientUnits="userSpaceOnUse" x1="1408.4" y1="465.8" x2="1500.5" y2="329.7"><stop offset="0.00" stop-color="#fff" stop-opacity="0.999"/><stop offset="0.10" stop-color="#fff" stop-opacity="0.887"/><stop offset="0.20" stop-color="#fff" stop-opacity="0.791"/><stop offset="0.30" stop-color="#fff" stop-opacity="0.705"/><stop offset="0.40" stop-color="#fff" stop-opacity="0.627"/><stop offset="0.50" stop-color="#fff" stop-opacity="0.553"/><stop offset="0.60" stop-color="#fff" stop-opacity="0.481"/><stop offset="0.70" stop-color="#fff" stop-opacity="0.407"/><stop offset="0.80" stop-color="#fff" stop-opacity="0.328"/><stop offset="0.90" stop-color="#fff" stop-opacity="0.232"/><stop offset="1.00" stop-color="#fff" stop-opacity="0.000"/></linearGradient><linearGradient id="wg1" gradientUnits="userSpaceOnUse" x1="1408.4" y1="465.8" x2="1320.3" y2="444.6"><stop offset="0.00" stop-color="#fff" stop-opacity="0.999"/><stop offset="0.10" stop-color="#fff" stop-opacity="0.913"/><stop offset="0.20" stop-color="#fff" stop-opacity="0.833"/><stop offset="0.30" stop-color="#fff" stop-opacity="0.757"/><stop offset="0.40" stop-color="#fff" stop-opacity="0.683"/><stop offset="0.50" stop-color="#fff" stop-opacity="0.611"/><stop offset="0.60" stop-color="#fff" stop-opacity="0.537"/><stop offset="0.70" stop-color="#fff" stop-opacity="0.459"/><stop offset="0.80" stop-color="#fff" stop-opacity="0.372"/><stop offset="0.90" stop-color="#fff" stop-opacity="0.266"/><stop offset="1.00" stop-color="#fff" stop-opacity="0.000"/></linearGradient><linearGradient id="wg2" gradientUnits="userSpaceOnUse" x1="1408.4" y1="465.8" x2="1447.0" y2="569.4"><stop offset="0.00" stop-color="#fff" stop-opacity="0.999"/><stop offset="0.10" stop-color="#fff" stop-opacity="0.895"/><stop offset="0.20" stop-color="#fff" stop-opacity="0.805"/><stop offset="0.30" stop-color="#fff" stop-opacity="0.723"/><stop offset="0.40" stop-color="#fff" stop-opacity="0.647"/><stop offset="0.50" stop-color="#fff" stop-opacity="0.574"/><stop offset="0.60" stop-color="#fff" stop-opacity="0.501"/><stop offset="0.70" stop-color="#fff" stop-opacity="0.426"/><stop offset="0.80" stop-color="#fff" stop-opacity="0.344"/><stop offset="0.90" stop-color="#fff" stop-opacity="0.244"/><stop offset="1.00" stop-color="#fff" stop-opacity="0.000"/></linearGradient></defs><path d="M1151.7,670.8 L1151.7,677.3 M1145.2,670.8 L1151.7,670.8 M1233.8,670.8 L1233.8,677.3 M1145.2,608.5 L1151.7,608.5 M1315.9,670.8 L1315.9,677.3 M1145.2,546.2 L1151.7,546.2 M1398.0,670.8 L1398.0,677.3 M1145.2,483.9 L1151.7,483.9 M1480.1,670.8 L1480.1,677.3 M1145.2,421.6 L1151.7,421.6 M1562.2,670.8 L1562.2,677.3 M1145.2,359.3 L1151.7,359.3 M1644.3,670.8 L1644.3,677.3 M1145.2,297.0 L1151.7,297.0 M1726.4,670.8 L1726.4,677.3 M1145.2,234.7 L1151.7,234.7 M1808.5,670.8 L1808.5,677.3 M1145.2,172.4 L1151.7,172.4 M1151.7,146.3 L1842.4,146.3 L1842.4,670.8 L1151.7,670.8 Z" stroke="#a8a8a8" stroke-width="2" fill="none"/></svg>
<div class="t" style="left:1151.7px;top:681.4px;font-size:14.80px;color:#e4e4e4;font-weight:normal;letter-spacing:0.00px;transform:translateX(-50%) scaleX(1.000);transform-origin:50% 50%;">0</div>
<div class="t" style="left:1145.2px;top:663.7px;font-size:14.80px;color:#e4e4e4;font-weight:normal;letter-spacing:0.00px;transform:translateX(-100%) scaleX(1.000);transform-origin:100% 50%;">0</div>
<div class="t" style="left:1233.8px;top:681.4px;font-size:14.80px;color:#e4e4e4;font-weight:normal;letter-spacing:0.00px;transform:translateX(-50%) scaleX(1.000);transform-origin:50% 50%;">0,1</div>
<div class="t" style="left:1145.2px;top:601.4px;font-size:14.80px;color:#e4e4e4;font-weight:normal;letter-spacing:0.00px;transform:translateX(-100%) scaleX(1.000);transform-origin:100% 50%;">0,1</div>
<div class="t" style="left:1315.9px;top:681.4px;font-size:14.80px;color:#e4e4e4;font-weight:normal;letter-spacing:0.00px;transform:translateX(-50%) scaleX(1.000);transform-origin:50% 50%;">0,2</div>
<div class="t" style="left:1145.2px;top:539.1px;font-size:14.80px;color:#e4e4e4;font-weight:normal;letter-spacing:0.00px;transform:translateX(-100%) scaleX(1.000);transform-origin:100% 50%;">0,2</div>
<div class="t" style="left:1398.0px;top:681.4px;font-size:14.80px;color:#e4e4e4;font-weight:normal;letter-spacing:0.00px;transform:translateX(-50%) scaleX(1.000);transform-origin:50% 50%;">0,3</div>
<div class="t" style="left:1145.2px;top:476.8px;font-size:14.80px;color:#e4e4e4;font-weight:normal;letter-spacing:0.00px;transform:translateX(-100%) scaleX(1.000);transform-origin:100% 50%;">0,3</div>
<div class="t" style="left:1480.1px;top:681.4px;font-size:14.80px;color:#e4e4e4;font-weight:normal;letter-spacing:0.00px;transform:translateX(-50%) scaleX(1.000);transform-origin:50% 50%;">0,4</div>
<div class="t" style="left:1145.2px;top:414.5px;font-size:14.80px;color:#e4e4e4;font-weight:normal;letter-spacing:0.00px;transform:translateX(-100%) scaleX(1.000);transform-origin:100% 50%;">0,4</div>
<div class="t" style="left:1562.2px;top:681.4px;font-size:14.80px;color:#e4e4e4;font-weight:normal;letter-spacing:0.00px;transform:translateX(-50%) scaleX(1.000);transform-origin:50% 50%;">0,5</div>
<div class="t" style="left:1145.2px;top:352.2px;font-size:14.80px;color:#e4e4e4;font-weight:normal;letter-spacing:0.00px;transform:translateX(-100%) scaleX(1.000);transform-origin:100% 50%;">0,5</div>
<div class="t" style="left:1644.3px;top:681.4px;font-size:14.80px;color:#e4e4e4;font-weight:normal;letter-spacing:0.00px;transform:translateX(-50%) scaleX(1.000);transform-origin:50% 50%;">0,6</div>
<div class="t" style="left:1145.2px;top:289.9px;font-size:14.80px;color:#e4e4e4;font-weight:normal;letter-spacing:0.00px;transform:translateX(-100%) scaleX(1.000);transform-origin:100% 50%;">0,6</div>
<div class="t" style="left:1726.4px;top:681.4px;font-size:14.80px;color:#e4e4e4;font-weight:normal;letter-spacing:0.00px;transform:translateX(-50%) scaleX(1.000);transform-origin:50% 50%;">0,7</div>
<div class="t" style="left:1145.2px;top:227.6px;font-size:14.80px;color:#e4e4e4;font-weight:normal;letter-spacing:0.00px;transform:translateX(-100%) scaleX(1.000);transform-origin:100% 50%;">0,7</div>
<div class="t" style="left:1808.5px;top:681.4px;font-size:14.80px;color:#e4e4e4;font-weight:normal;letter-spacing:0.00px;transform:translateX(-50%) scaleX(1.000);transform-origin:50% 50%;">0,8</div>
<div class="t" style="left:1145.2px;top:165.3px;font-size:14.80px;color:#e4e4e4;font-weight:normal;letter-spacing:0.00px;transform:translateX(-100%) scaleX(1.000);transform-origin:100% 50%;">0,8</div>
<div class="t" style="left:1483.0px;top:128.8px;font-size:15.00px;color:#e4e4e4;font-weight:normal;letter-spacing:0.00px;transform:translateX(-50%) scaleX(1.000);transform-origin:50% 50%;">CIE 1931 xy</div>
<svg class="a" style="left:0;top:0" width="1920" height="1040"><rect x="1401.5" y="458.6" width="13.6" height="13.6" fill="none" stroke="#101010" stroke-width="2.2"/><rect x="1461.2" y="458.6" width="13.6" height="13.6" fill="#ffffff" fill-opacity="0.08" stroke="#ffffff" stroke-opacity="0.9" stroke-width="2.0"/><rect x="1517.8" y="459.6" width="13.6" height="13.6" fill="#ffffff" fill-opacity="0.08" stroke="#ffffff" stroke-opacity="0.9" stroke-width="2.0"/><rect x="1580.2" y="461.0" width="13.6" height="13.6" fill="#ffffff" fill-opacity="0.08" stroke="#ffffff" stroke-opacity="0.9" stroke-width="2.0"/><rect x="1635.0" y="462.4" width="13.6" height="13.6" fill="#ffffff" fill-opacity="0.08" stroke="#ffffff" stroke-opacity="0.9" stroke-width="2.0"/><rect x="1702.7" y="462.7" width="13.6" height="13.6" fill="#ffffff" fill-opacity="0.08" stroke="#ffffff" stroke-opacity="0.9" stroke-width="2.0"/><rect x="1393.2" y="412.2" width="13.6" height="13.6" fill="#ffffff" fill-opacity="0.08" stroke="#ffffff" stroke-opacity="0.9" stroke-width="2.0"/><rect x="1385.7" y="366.9" width="13.6" height="13.6" fill="#ffffff" fill-opacity="0.08" stroke="#ffffff" stroke-opacity="0.9" stroke-width="2.0"/><rect x="1378.6" y="324.4" width="13.6" height="13.6" fill="#ffffff" fill-opacity="0.08" stroke="#ffffff" stroke-opacity="0.9" stroke-width="2.0"/><rect x="1370.0" y="281.9" width="13.6" height="13.6" fill="#ffffff" fill-opacity="0.08" stroke="#ffffff" stroke-opacity="0.9" stroke-width="2.0"/><rect x="1362.2" y="232.4" width="13.6" height="13.6" fill="#ffffff" fill-opacity="0.08" stroke="#ffffff" stroke-opacity="0.9" stroke-width="2.0"/><rect x="1422.1" y="431.1" width="13.6" height="13.6" fill="#ffffff" fill-opacity="0.08" stroke="#ffffff" stroke-opacity="0.9" stroke-width="2.0"/><rect x="1442.1" y="406.7" width="13.6" height="13.6" fill="#ffffff" fill-opacity="0.08" stroke="#ffffff" stroke-opacity="0.9" stroke-width="2.0"/><rect x="1461.2" y="381.9" width="13.6" height="13.6" fill="#ffffff" fill-opacity="0.08" stroke="#ffffff" stroke-opacity="0.9" stroke-width="2.0"/><rect x="1483.2" y="355.8" width="13.6" height="13.6" fill="#ffffff" fill-opacity="0.08" stroke="#ffffff" stroke-opacity="0.9" stroke-width="2.0"/><rect x="1504.7" y="328.2" width="13.6" height="13.6" fill="#ffffff" fill-opacity="0.08" stroke="#ffffff" stroke-opacity="0.9" stroke-width="2.0"/><rect x="1382.7" y="457.4" width="13.6" height="13.6" fill="#ffffff" fill-opacity="0.08" stroke="#ffffff" stroke-opacity="0.9" stroke-width="2.0"/><rect x="1363.4" y="457.4" width="13.6" height="13.6" fill="#ffffff" fill-opacity="0.08" stroke="#ffffff" stroke-opacity="0.9" stroke-width="2.0"/><rect x="1344.7" y="457.2" width="13.6" height="13.6" fill="#ffffff" fill-opacity="0.08" stroke="#ffffff" stroke-opacity="0.9" stroke-width="2.0"/><rect x="1327.5" y="457.1" width="13.6" height="13.6" fill="#ffffff" fill-opacity="0.08" stroke="#ffffff" stroke-opacity="0.9" stroke-width="2.0"/><rect x="1309.0" y="456.4" width="13.6" height="13.6" fill="#ffffff" fill-opacity="0.08" stroke="#ffffff" stroke-opacity="0.9" stroke-width="2.0"/><rect x="1404.6" y="480.2" width="13.6" height="13.6" fill="#ffffff" fill-opacity="0.08" stroke="#ffffff" stroke-opacity="0.9" stroke-width="2.0"/><rect x="1408.7" y="502.0" width="13.6" height="13.6" fill="#ffffff" fill-opacity="0.08" stroke="#ffffff" stroke-opacity="0.9" stroke-width="2.0"/><rect x="1412.8" y="523.7" width="13.6" height="13.6" fill="#ffffff" fill-opacity="0.08" stroke="#ffffff" stroke-opacity="0.9" stroke-width="2.0"/><rect x="1416.9" y="545.9" width="13.6" height="13.6" fill="#ffffff" fill-opacity="0.08" stroke="#ffffff" stroke-opacity="0.9" stroke-width="2.0"/><rect x="1420.4" y="569.4" width="13.6" height="13.6" fill="#ffffff" fill-opacity="0.08" stroke="#ffffff" stroke-opacity="0.9" stroke-width="2.0"/><rect x="1374.2" y="491.4" width="13.6" height="13.6" fill="#ffffff" fill-opacity="0.08" stroke="#ffffff" stroke-opacity="0.9" stroke-width="2.0"/><rect x="1348.2" y="525.4" width="13.6" height="13.6" fill="#ffffff" fill-opacity="0.08" stroke="#ffffff" stroke-opacity="0.9" stroke-width="2.0"/><rect x="1321.9" y="557.1" width="13.6" height="13.6" fill="#ffffff" fill-opacity="0.08" stroke="#ffffff" stroke-opacity="0.9" stroke-width="2.0"/><rect x="1295.5" y="589.9" width="13.6" height="13.6" fill="#ffffff" fill-opacity="0.08" stroke="#ffffff" stroke-opacity="0.9" stroke-width="2.0"/><rect x="1266.8" y="625.2" width="13.6" height="13.6" fill="#ffffff" fill-opacity="0.08" stroke="#ffffff" stroke-opacity="0.9" stroke-width="2.0"/><circle cx="1466.9" cy="467.0" r="4.3" fill="#be8c8c" stroke="#141414" stroke-width="1.5"/><circle cx="1527.3" cy="467.1" r="4.3" fill="#bf7070" stroke="#141414" stroke-width="1.5"/><circle cx="1595.5" cy="468.5" r="4.3" fill="#c46464" stroke="#141414" stroke-width="1.5"/><circle cx="1657.8" cy="469.5" r="4.3" fill="#c45c5c" stroke="#141414" stroke-width="1.5"/><circle cx="1705.8" cy="471.2" r="4.3" fill="#c81818" stroke="#141414" stroke-width="1.5"/><circle cx="1400.0" cy="420.6" r="4.3" fill="#a0b4a0" stroke="#141414" stroke-width="1.5"/><circle cx="1391.1" cy="372.9" r="4.3" fill="#8cae8c" stroke="#141414" stroke-width="1.5"/><circle cx="1382.6" cy="325.0" r="4.3" fill="#80b080" stroke="#141414" stroke-width="1.5"/><circle cx="1375.2" cy="276.9" r="4.3" fill="#6cb06c" stroke="#141414" stroke-width="1.5"/><circle cx="1366.8" cy="236.8" r="4.3" fill="#30a030" stroke="#141414" stroke-width="1.5"/><circle cx="1429.1" cy="439.5" r="4.3" fill="#bebea8" stroke="#141414" stroke-width="1.5"/><circle cx="1447.9" cy="414.9" r="4.3" fill="#c4c49c" stroke="#141414" stroke-width="1.5"/><circle cx="1469.2" cy="387.1" r="4.3" fill="#c4c48c" stroke="#141414" stroke-width="1.5"/><circle cx="1492.8" cy="359.8" r="4.3" fill="#c4c470" stroke="#141414" stroke-width="1.5"/><circle cx="1511.3" cy="335.5" r="4.3" fill="#b8b830" stroke="#141414" stroke-width="1.5"/><circle cx="1390.0" cy="465.6" r="4.3" fill="#a8b8b8" stroke="#141414" stroke-width="1.5"/><circle cx="1369.5" cy="465.6" r="4.3" fill="#98b8b8" stroke="#141414" stroke-width="1.5"/><circle cx="1352.0" cy="465.8" r="4.3" fill="#8cb4b4" stroke="#141414" stroke-width="1.5"/><circle cx="1331.8" cy="465.8" r="4.3" fill="#7cb0b0" stroke="#141414" stroke-width="1.5"/><circle cx="1314.2" cy="463.8" r="4.3" fill="#30a8a8" stroke="#141414" stroke-width="1.5"/><circle cx="1411.4" cy="487.5" r="4.3" fill="#b8a0b8" stroke="#141414" stroke-width="1.5"/><circle cx="1414.7" cy="509.2" r="4.3" fill="#b48cb4" stroke="#141414" stroke-width="1.5"/><circle cx="1419.0" cy="531.6" r="4.3" fill="#b478b4" stroke="#141414" stroke-width="1.5"/><circle cx="1422.6" cy="555.0" r="4.3" fill="#b860b8" stroke="#141414" stroke-width="1.5"/><circle cx="1426.7" cy="576.2" r="4.3" fill="#b040b0" stroke="#141414" stroke-width="1.5"/><circle cx="1381.0" cy="498.6" r="4.3" fill="#a0a0bc" stroke="#141414" stroke-width="1.5"/><circle cx="1353.9" cy="533.4" r="4.3" fill="#8c8cbc" stroke="#141414" stroke-width="1.5"/><circle cx="1327.6" cy="568.0" r="4.3" fill="#7070bc" stroke="#141414" stroke-width="1.5"/><circle cx="1298.2" cy="602.6" r="4.3" fill="#6060c0" stroke="#141414" stroke-width="1.5"/><circle cx="1273.6" cy="632.0" r="4.6" fill="#1414b4" stroke="#0a0a60" stroke-width="1.2"/><circle cx="1407.7" cy="465.4" r="4.8" fill="#ffffff" stroke="#141414" stroke-width="1.7"/></svg>
<div class="a" style="left:1601.3px;top:153.4px;width:235.1px;height:198.1px;background:#232323;border:1.5px solid #9a9a9a"></div>
<div class="a" style="left:0;top:0;width:1920px;height:1040px;clip-path:polygon(1602.3px 154.4px, 1717px 154.4px, 1835.4px 252px, 1835.4px 350.5px, 1602.3px 350.5px)"><div style="position:absolute;left:1602.3px;top:154.4px;width:233.1px;height:3.0px;background:linear-gradient(90deg,#719400 0px,#949200 201px,#948c00 233px)"></div><div style="position:absolute;left:1602.3px;top:157.4px;width:233.1px;height:3.0px;background:linear-gradient(90deg,#719400 0px,#949200 198px,#948c00 233px)"></div><div style="position:absolute;left:1602.3px;top:160.4px;width:233.1px;height:3.0px;background:linear-gradient(90deg,#719400 0px,#949200 198px,#948b00 233px)"></div><div style="position:absolute;left:1602.3px;top:163.4px;width:233.1px;height:3.0px;background:linear-gradient(90deg,#729400 0px,#949200 194px,#948b00 233px)"></div><div style="position:absolute;left:1602.3px;top:166.4px;width:233.1px;height:3.0px;background:linear-gradient(90deg,#729400 0px,#949200 194px,#948a00 233px)"></div><div style="position:absolute;left:1602.3px;top:169.4px;width:233.1px;height:3.0px;background:linear-gradient(90deg,#729400 0px,#949200 190px,#948a00 233px)"></div><div style="position:absolute;left:1602.3px;top:172.4px;width:233.1px;height:3.0px;background:linear-gradient(90deg,#739400 0px,#949200 190px,#948a00 233px)"></div><div style="position:absolute;left:1602.3px;top:175.4px;width:233.1px;height:3.0px;background:linear-gradient(90deg,#739400 0px,#949200 186px,#948900 233px)"></div><div style="position:absolute;left:1602.3px;top:178.4px;width:233.1px;height:3.0px;background:linear-gradient(90deg,#739400 0px,#949200 186px,#948900 233px)"></div><div style="position:absolute;left:1602.3px;top:181.4px;width:233.1px;height:3.0px;background:linear-gradient(90deg,#749400 0px,#949200 182px,#948800 233px)"></div><div style="position:absolute;left:1602.3px;top:184.4px;width:233.1px;height:3.0px;background:linear-gradient(90deg,#749401 0px,#949200 178px,#948800 233px)"></div><div style="position:absolute;left:1602.3px;top:187.4px;width:233.1px;height:3.0px;background:linear-gradient(90deg,#749401 0px,#949200 178px,#948800 233px)"></div><div style="position:absolute;left:1602.3px;top:190.4px;width:233.1px;height:3.0px;background:linear-gradient(90deg,#759401 0px,#949200 174px,#948700 233px)"></div><div style="position:absolute;left:1602.3px;top:193.4px;width:233.1px;height:3.0px;background:linear-gradient(90deg,#759401 0px,#949200 174px,#948700 233px)"></div><div style="position:absolute;left:1602.3px;top:196.4px;width:233.1px;height:3.0px;background:linear-gradient(90deg,#759401 0px,#949200 170px,#948600 233px)"></div><div style="position:absolute;left:1602.3px;top:199.4px;width:233.1px;height:3.0px;background:linear-gradient(90deg,#769401 0px,#949200 170px,#948600 233px)"></div><div style="position:absolute;left:1602.3px;top:202.4px;width:233.1px;height:3.0px;background:linear-gradient(90deg,#769402 0px,#949200 166px,#948600 233px)"></div><div style="position:absolute;left:1602.3px;top:205.4px;width:233.1px;height:3.0px;background:linear-gradient(90deg,#769402 0px,#949200 166px,#948500 233px)"></div><div style="position:absolute;left:1602.3px;top:208.4px;width:233.1px;height:3.0px;background:linear-gradient(90deg,#779402 0px,#949200 162px,#948500 233px)"></div><div style="position:absolute;left:1602.3px;top:211.4px;width:233.1px;height:3.0px;background:linear-gradient(90deg,#779402 0px,#949200 158px,#948400 233px)"></div><div style="position:absolute;left:1602.3px;top:214.4px;width:233.1px;height:3.0px;background:linear-gradient(90deg,#779402 0px,#949200 158px,#948400 233px)"></div><div style="position:absolute;left:1602.3px;top:217.4px;width:233.1px;height:3.0px;background:linear-gradient(90deg,#789403 0px,#949200 154px,#948400 233px)"></div><div style="position:absolute;left:1602.3px;top:220.4px;width:233.1px;height:3.0px;background:linear-gradient(90deg,#789403 0px,#949200 154px,#948300 233px)"></div><div style="position:absolute;left:1602.3px;top:223.4px;width:233.1px;height:3.0px;background:linear-gradient(90deg,#789403 0px,#949200 150px,#948300 233px)"></div><div style="position:absolute;left:1602.3px;top:226.4px;width:233.1px;height:3.0px;background:linear-gradient(90deg,#799403 0px,#949200 150px,#948300 233px)"></div><div style="position:absolute;left:1602.3px;top:229.4px;width:233.1px;height:3.0px;background:linear-gradient(90deg,#799403 0px,#949200 146px,#948200 233px)"></div><div style="position:absolute;left:1602.3px;top:232.4px;width:233.1px;height:3.0px;background:linear-gradient(90deg,#7a9404 0px,#949200 146px,#948200 233px)"></div><div style="position:absolute;left:1602.3px;top:235.4px;width:233.1px;height:3.0px;background:linear-gradient(90deg,#7a9404 0px,#949200 142px,#948100 233px)"></div><div style="position:absolute;left:1602.3px;top:238.4px;width:233.1px;height:3.0px;background:linear-gradient(90deg,#7a9404 0px,#949200 142px,#948100 233px)"></div><div style="position:absolute;left:1602.3px;top:241.4px;width:233.1px;height:3.0px;background:linear-gradient(90deg,#7b9404 0px,#949200 138px,#948100 233px)"></div><div style="position:absolute;left:1602.3px;top:244.4px;width:233.1px;height:3.0px;background:linear-gradient(90deg,#7b9404 0px,#949200 134px,#948000 233px)"></div><div style="position:absolute;left:1602.3px;top:247.4px;width:233.1px;height:3.0px;background:linear-gradient(90deg,#7b9405 0px,#949200 134px,#948000 233px)"></div><div style="position:absolute;left:1602.3px;top:250.4px;width:233.1px;height:3.0px;background:linear-gradient(90deg,#7c9405 0px,#949200 130px,#947f00 233px)"></div><div style="position:absolute;left:1602.3px;top:253.4px;width:233.1px;height:3.0px;background:linear-gradient(90deg,#7c9405 0px,#949200 130px,#947f00 233px)"></div><div style="position:absolute;left:1602.3px;top:256.4px;width:233.1px;height:3.0px;background:linear-gradient(90deg,#7c9405 0px,#949200 126px,#947f00 233px)"></div><div style="position:absolute;left:1602.3px;top:259.4px;width:233.1px;height:3.0px;background:linear-gradient(90deg,#7d9405 0px,#949200 126px,#947e00 233px)"></div><div style="position:absolute;left:1602.3px;top:262.4px;width:233.1px;height:3.0px;background:linear-gradient(90deg,#7d9406 0px,#949200 122px,#947e00 233px)"></div><div style="position:absolute;left:1602.3px;top:265.4px;width:233.1px;height:3.0px;background:linear-gradient(90deg,#7e9406 0px,#949200 122px,#947e00 233px)"></div><div style="position:absolute;left:1602.3px;top:268.4px;width:233.1px;height:3.0px;background:linear-gradient(90deg,#7e9406 0px,#949200 119px,#947d00 233px)"></div><div style="position:absolute;left:1602.3px;top:271.4px;width:233.1px;height:3.0px;background:linear-gradient(90deg,#7e9406 0px,#949201 115px,#947d00 233px)"></div><div style="position:absolute;left:1602.3px;top:274.4px;width:233.1px;height:3.0px;background:linear-gradient(90deg,#7f9407 0px,#949201 115px,#947c00 233px)"></div><div style="position:absolute;left:1602.3px;top:277.4px;width:233.1px;height:3.0px;background:linear-gradient(90deg,#7f9407 0px,#949201 111px,#947c00 233px)"></div><div style="position:absolute;left:1602.3px;top:280.4px;width:233.1px;height:3.0px;background:linear-gradient(90deg,#809407 0px,#949201 111px,#947c00 233px)"></div><div style="position:absolute;left:1602.3px;top:283.4px;width:233.1px;height:3.0px;background:linear-gradient(90deg,#809407 0px,#949202 107px,#947b00 233px)"></div><div style="position:absolute;left:1602.3px;top:286.4px;width:233.1px;height:3.0px;background:linear-gradient(90deg,#809407 0px,#949202 107px,#947b00 233px)"></div><div style="position:absolute;left:1602.3px;top:289.4px;width:233.1px;height:3.0px;background:linear-gradient(90deg,#819408 0px,#949202 103px,#947a00 233px)"></div><div style="position:absolute;left:1602.3px;top:292.4px;width:233.1px;height:3.0px;background:linear-gradient(90deg,#819408 0px,#949203 103px,#947a00 233px)"></div><div style="position:absolute;left:1602.3px;top:295.4px;width:233.1px;height:3.0px;background:linear-gradient(90deg,#829408 0px,#949203 99px,#947a00 233px)"></div><div style="position:absolute;left:1602.3px;top:298.4px;width:233.1px;height:3.0px;background:linear-gradient(90deg,#829408 0px,#949204 95px,#947900 233px)"></div><div style="position:absolute;left:1602.3px;top:301.4px;width:233.1px;height:3.0px;background:linear-gradient(90deg,#829408 0px,#949204 95px,#947900 233px)"></div><div style="position:absolute;left:1602.3px;top:304.4px;width:233.1px;height:3.0px;background:linear-gradient(90deg,#839409 0px,#949204 91px,#947900 233px)"></div><div style="position:absolute;left:1602.3px;top:307.4px;width:233.1px;height:3.0px;background:linear-gradient(90deg,#839409 0px,#949204 91px,#947800 233px)"></div><div style="position:absolute;left:1602.3px;top:310.4px;width:233.1px;height:3.0px;background:linear-gradient(90deg,#849409 0px,#949205 87px,#947800 233px)"></div><div style="position:absolute;left:1602.3px;top:313.4px;width:233.1px;height:3.0px;background:linear-gradient(90deg,#849409 0px,#949205 87px,#947700 233px)"></div><div style="position:absolute;left:1602.3px;top:316.4px;width:233.1px;height:3.0px;background:linear-gradient(90deg,#84940a 0px,#949205 83px,#947700 233px)"></div><div style="position:absolute;left:1602.3px;top:319.4px;width:233.1px;height:3.0px;background:linear-gradient(90deg,#85940a 0px,#949206 83px,#947700 233px)"></div><div style="position:absolute;left:1602.3px;top:322.4px;width:233.1px;height:3.0px;background:linear-gradient(90deg,#85940a 0px,#949206 79px,#947600 233px)"></div><div style="position:absolute;left:1602.3px;top:325.4px;width:233.1px;height:3.0px;background:linear-gradient(90deg,#86940a 0px,#949206 79px,#947600 233px)"></div><div style="position:absolute;left:1602.3px;top:328.4px;width:233.1px;height:3.0px;background:linear-gradient(90deg,#86940b 0px,#949207 75px,#947600 233px)"></div><div style="position:absolute;left:1602.3px;top:331.4px;width:233.1px;height:3.0px;background:linear-gradient(90deg,#87940b 0px,#949207 71px,#947500 233px)"></div><div style="position:absolute;left:1602.3px;top:334.4px;width:233.1px;height:3.0px;background:linear-gradient(90deg,#87940b 0px,#949107 75px,#947500 233px)"></div><div style="position:absolute;left:1602.3px;top:337.4px;width:233.1px;height:3.0px;background:linear-gradient(90deg,#87940b 0px,#949208 67px,#947400 233px)"></div><div style="position:absolute;left:1602.3px;top:340.4px;width:233.1px;height:3.0px;background:linear-gradient(90deg,#88940b 0px,#949208 67px,#947400 233px)"></div><div style="position:absolute;left:1602.3px;top:343.4px;width:233.1px;height:3.0px;background:linear-gradient(90deg,#88940c 0px,#949108 67px,#947400 233px)"></div><div style="position:absolute;left:1602.3px;top:346.4px;width:233.1px;height:3.0px;background:linear-gradient(90deg,#89940c 0px,#949209 63px,#947300 233px)"></div><div style="position:absolute;left:1602.3px;top:349.4px;width:233.1px;height:1.1px;background:linear-gradient(90deg,#89940c 0px,#949109 63px,#947300 233px)"></div></div>
<div class="a" style="left:0;top:0;width:1920px;height:1040px;clip-path:polygon(1602.3px 165.4px, 1835.4px 338.9px, 1835.4px 350.5px, 1602.3px 350.5px)"><div style="position:absolute;left:1602.3px;top:154.4px;width:233.1px;height:3.0px;background:linear-gradient(90deg,#c2ff00 0px,#fffd00 198px,#fff100 233px)"></div><div style="position:absolute;left:1602.3px;top:157.4px;width:233.1px;height:3.0px;background:linear-gradient(90deg,#c3ff00 0px,#fffd00 194px,#fff100 233px)"></div><div style="position:absolute;left:1602.3px;top:160.4px;width:233.1px;height:3.0px;background:linear-gradient(90deg,#c3ff00 0px,#fffd00 194px,#fff000 233px)"></div><div style="position:absolute;left:1602.3px;top:163.4px;width:233.1px;height:3.0px;background:linear-gradient(90deg,#c4ff00 0px,#fffd00 190px,#ffef00 233px)"></div><div style="position:absolute;left:1602.3px;top:166.4px;width:233.1px;height:3.0px;background:linear-gradient(90deg,#c4ff00 0px,#fffd00 190px,#ffef00 233px)"></div><div style="position:absolute;left:1602.3px;top:169.4px;width:233.1px;height:3.0px;background:linear-gradient(90deg,#c5ff00 0px,#fffd00 186px,#ffee00 233px)"></div><div style="position:absolute;left:1602.3px;top:172.4px;width:233.1px;height:3.0px;background:linear-gradient(90deg,#c5ff00 0px,#fffe00 182px,#ffed00 233px)"></div><div style="position:absolute;left:1602.3px;top:175.4px;width:233.1px;height:3.0px;background:linear-gradient(90deg,#c6ff00 0px,#fffd00 182px,#ffed00 233px)"></div><div style="position:absolute;left:1602.3px;top:178.4px;width:233.1px;height:3.0px;background:linear-gradient(90deg,#c7ff00 0px,#fffe00 178px,#ffec00 233px)"></div><div style="position:absolute;left:1602.3px;top:181.4px;width:233.1px;height:3.0px;background:linear-gradient(90deg,#c7ff01 0px,#fffd00 178px,#ffeb00 233px)"></div><div style="position:absolute;left:1602.3px;top:184.4px;width:233.1px;height:3.0px;background:linear-gradient(90deg,#c8ff01 0px,#fffd00 174px,#ffea00 233px)"></div><div style="position:absolute;left:1602.3px;top:187.4px;width:233.1px;height:3.0px;background:linear-gradient(90deg,#c8ff01 0px,#fffd00 174px,#ffea00 233px)"></div><div style="position:absolute;left:1602.3px;top:190.4px;width:233.1px;height:3.0px;background:linear-gradient(90deg,#c9ff02 0px,#fffd00 170px,#ffe900 233px)"></div><div style="position:absolute;left:1602.3px;top:193.4px;width:233.1px;height:3.0px;background:linear-gradient(90deg,#caff02 0px,#fffd00 170px,#ffe800 233px)"></div><div style="position:absolute;left:1602.3px;top:196.4px;width:233.1px;height:3.0px;background:linear-gradient(90deg,#caff02 0px,#fffd00 166px,#ffe800 233px)"></div><div style="position:absolute;left:1602.3px;top:199.4px;width:233.1px;height:3.0px;background:linear-gradient(90deg,#cbff03 0px,#fffe00 162px,#ffe700 233px)"></div><div style="position:absolute;left:1602.3px;top:202.4px;width:233.1px;height:3.0px;background:linear-gradient(90deg,#cbff03 0px,#fffd00 162px,#ffe600 233px)"></div><div style="position:absolute;left:1602.3px;top:205.4px;width:233.1px;height:3.0px;background:linear-gradient(90deg,#ccff03 0px,#fffe00 158px,#ffe600 233px)"></div><div style="position:absolute;left:1602.3px;top:208.4px;width:233.1px;height:3.0px;background:linear-gradient(90deg,#cdff03 0px,#fffd00 158px,#ffe500 233px)"></div><div style="position:absolute;left:1602.3px;top:211.4px;width:233.1px;height:3.0px;background:linear-gradient(90deg,#cdff04 0px,#f3ff00 115px,#fffc00 158px,#ffe400 233px)"></div><div style="position:absolute;left:1602.3px;top:214.4px;width:233.1px;height:3.0px;background:linear-gradient(90deg,#ceff04 0px,#f8ff00 126px,#fffb00 158px,#ffe400 233px)"></div><div style="position:absolute;left:1602.3px;top:217.4px;width:233.1px;height:3.0px;background:linear-gradient(90deg,#ceff05 0px,#f0ff00 103px,#fffd00 150px,#ffe300 233px)"></div><div style="position:absolute;left:1602.3px;top:220.4px;width:233.1px;height:3.0px;background:linear-gradient(90deg,#cfff05 0px,#f4ff00 111px,#fffd00 150px,#ffe200 233px)"></div><div style="position:absolute;left:1602.3px;top:223.4px;width:233.1px;height:3.0px;background:linear-gradient(90deg,#d0ff05 0px,#f7ff00 119px,#fffc00 150px,#ffe200 233px)"></div><div style="position:absolute;left:1602.3px;top:226.4px;width:233.1px;height:3.0px;background:linear-gradient(90deg,#d0ff06 0px,#f4ff00 107px,#fffd00 146px,#ffe100 233px)"></div><div style="position:absolute;left:1602.3px;top:229.4px;width:233.1px;height:3.0px;background:linear-gradient(90deg,#d1ff06 0px,#f7ff00 115px,#fffc00 146px,#ffe000 233px)"></div><div style="position:absolute;left:1602.3px;top:232.4px;width:233.1px;height:3.0px;background:linear-gradient(90deg,#d2ff06 0px,#f9ff00 119px,#fffc00 142px,#ffe000 233px)"></div><div style="position:absolute;left:1602.3px;top:235.4px;width:233.1px;height:3.0px;background:linear-gradient(90deg,#d2ff07 0px,#f9ff00 115px,#fffa00 146px,#ffdf00 233px)"></div><div style="position:absolute;left:1602.3px;top:238.4px;width:233.1px;height:3.0px;background:linear-gradient(90deg,#d3ff07 0px,#fcff00 122px,#fff200 170px,#ffde00 233px)"></div><div style="position:absolute;left:1602.3px;top:241.4px;width:233.1px;height:3.0px;background:linear-gradient(90deg,#d3ff07 0px,#feff00 126px,#ffde00 233px)"></div><div style="position:absolute;left:1602.3px;top:244.4px;width:233.1px;height:3.0px;background:linear-gradient(90deg,#d4ff08 0px,#feff00 122px,#ffdd00 233px)"></div><div style="position:absolute;left:1602.3px;top:247.4px;width:233.1px;height:3.0px;background:linear-gradient(90deg,#d5ff08 0px,#fffd00 130px,#ffdc00 233px)"></div><div style="position:absolute;left:1602.3px;top:250.4px;width:233.1px;height:3.0px;background:linear-gradient(90deg,#d5ff08 0px,#fffd00 126px,#ffdc00 233px)"></div><div style="position:absolute;left:1602.3px;top:253.4px;width:233.1px;height:3.0px;background:linear-gradient(90deg,#d6ff09 0px,#fffe00 122px,#ffdb00 233px)"></div><div style="position:absolute;left:1602.3px;top:256.4px;width:233.1px;height:3.0px;background:linear-gradient(90deg,#d7ff09 0px,#fffd00 122px,#ffda00 233px)"></div><div style="position:absolute;left:1602.3px;top:259.4px;width:233.1px;height:3.0px;background:linear-gradient(90deg,#d7ff09 0px,#fffe00 119px,#ffda00 233px)"></div><div style="position:absolute;left:1602.3px;top:262.4px;width:233.1px;height:3.0px;background:linear-gradient(90deg,#d8ff0a 0px,#fffd00 119px,#ffd900 233px)"></div><div style="position:absolute;left:1602.3px;top:265.4px;width:233.1px;height:3.0px;background:linear-gradient(90deg,#d9ff0a 0px,#fffe00 115px,#ffd800 233px)"></div><div style="position:absolute;left:1602.3px;top:268.4px;width:233.1px;height:3.0px;background:linear-gradient(90deg,#d9ff0a 0px,#fffd01 115px,#ffd800 233px)"></div><div style="position:absolute;left:1602.3px;top:271.4px;width:233.1px;height:3.0px;background:linear-gradient(90deg,#daff0b 0px,#fffe01 111px,#ffd700 233px)"></div><div style="position:absolute;left:1602.3px;top:274.4px;width:233.1px;height:3.0px;background:linear-gradient(90deg,#dbff0b 0px,#fffd02 111px,#ffd600 233px)"></div><div style="position:absolute;left:1602.3px;top:277.4px;width:233.1px;height:3.0px;background:linear-gradient(90deg,#dbff0c 0px,#fffd03 107px,#ffd600 233px)"></div><div style="position:absolute;left:1602.3px;top:280.4px;width:233.1px;height:3.0px;background:linear-gradient(90deg,#dcff0c 0px,#fffd03 107px,#ffd500 233px)"></div><div style="position:absolute;left:1602.3px;top:283.4px;width:233.1px;height:3.0px;background:linear-gradient(90deg,#ddff0c 0px,#fffd04 103px,#ffe000 194px,#ffd400 233px)"></div><div style="position:absolute;left:1602.3px;top:286.4px;width:233.1px;height:3.0px;background:linear-gradient(90deg,#ddff0d 0px,#fffe04 99px,#ffd900 213px,#ffd400 233px)"></div><div style="position:absolute;left:1602.3px;top:289.4px;width:233.1px;height:3.0px;background:linear-gradient(90deg,#deff0d 0px,#fffd05 99px,#ffe000 190px,#ffd300 233px)"></div><div style="position:absolute;left:1602.3px;top:292.4px;width:233.1px;height:3.0px;background:linear-gradient(90deg,#dfff0d 0px,#fffe05 95px,#ffda00 205px,#ffd300 233px)"></div><div style="position:absolute;left:1602.3px;top:295.4px;width:233.1px;height:3.0px;background:linear-gradient(90deg,#dfff0e 0px,#fffd06 95px,#ffdd00 194px,#ffd200 233px)"></div><div style="position:absolute;left:1602.3px;top:298.4px;width:233.1px;height:3.0px;background:linear-gradient(90deg,#e0ff0e 0px,#fffe06 91px,#ffd900 205px,#ffd100 233px)"></div><div style="position:absolute;left:1602.3px;top:301.4px;width:233.1px;height:3.0px;background:linear-gradient(90deg,#e1ff0f 0px,#fffd07 91px,#ffda00 198px,#ffd100 233px)"></div><div style="position:absolute;left:1602.3px;top:304.4px;width:233.1px;height:3.0px;background:linear-gradient(90deg,#e1ff0f 0px,#fffe08 87px,#ffd900 201px,#ffd000 233px)"></div><div style="position:absolute;left:1602.3px;top:307.4px;width:233.1px;height:3.0px;background:linear-gradient(90deg,#e2ff0f 0px,#fffd08 87px,#ffd700 205px,#ffcf00 233px)"></div><div style="position:absolute;left:1602.3px;top:310.4px;width:233.1px;height:3.0px;background:linear-gradient(90deg,#e3ff10 0px,#fffd09 83px,#ffd600 205px,#ffcf00 233px)"></div><div style="position:absolute;left:1602.3px;top:313.4px;width:233.1px;height:3.0px;background:linear-gradient(90deg,#e4ff10 0px,#fffd09 83px,#ffd300 213px,#ffce00 233px)"></div><div style="position:absolute;left:1602.3px;top:316.4px;width:233.1px;height:3.0px;background:linear-gradient(90deg,#e4ff11 0px,#fffd0a 79px,#ffd300 213px,#ffcd00 233px)"></div><div style="position:absolute;left:1602.3px;top:319.4px;width:233.1px;height:3.0px;background:linear-gradient(90deg,#e5ff11 0px,#fffe0a 75px,#ffd000 221px,#ffcd00 233px)"></div><div style="position:absolute;left:1602.3px;top:322.4px;width:233.1px;height:3.0px;background:linear-gradient(90deg,#e6ff11 0px,#fffd0b 75px,#ffcf00 221px,#ffcc00 233px)"></div><div style="position:absolute;left:1602.3px;top:325.4px;width:233.1px;height:3.0px;background:linear-gradient(90deg,#e6ff12 0px,#fffe0c 71px,#ffd000 217px,#ffcb00 233px)"></div><div style="position:absolute;left:1602.3px;top:328.4px;width:233.1px;height:3.0px;background:linear-gradient(90deg,#e7ff12 0px,#fffd0c 71px,#ffcc00 229px,#ffcb00 233px)"></div><div style="position:absolute;left:1602.3px;top:331.4px;width:233.1px;height:3.0px;background:linear-gradient(90deg,#e8ff13 0px,#fffe0d 67px,#ffcd00 221px,#ffca00 233px)"></div><div style="position:absolute;left:1602.3px;top:334.4px;width:233.1px;height:3.0px;background:linear-gradient(90deg,#e9ff13 0px,#fffd0d 67px,#ffce00 217px,#ffc900 233px)"></div><div style="position:absolute;left:1602.3px;top:337.4px;width:233.1px;height:3.0px;background:linear-gradient(90deg,#e9ff13 0px,#fffe0e 63px,#ffcf00 209px,#ffc900 233px)"></div><div style="position:absolute;left:1602.3px;top:340.4px;width:233.1px;height:3.0px;background:linear-gradient(90deg,#eaff14 0px,#fffd0e 63px,#ffcc00 217px,#ffc800 233px)"></div><div style="position:absolute;left:1602.3px;top:343.4px;width:233.1px;height:3.0px;background:linear-gradient(90deg,#ebff14 0px,#fffd0f 59px,#ffcc00 217px,#ffc800 233px)"></div><div style="position:absolute;left:1602.3px;top:346.4px;width:233.1px;height:3.0px;background:linear-gradient(90deg,#ecff15 0px,#fffd0f 59px,#ffcc01 213px,#ffc700 233px)"></div><div style="position:absolute;left:1602.3px;top:349.4px;width:233.1px;height:1.1px;background:linear-gradient(90deg,#ecff15 0px,#fffd10 55px,#ffc800 225px,#ffc600 233px)"></div></div>
<svg class="a" style="left:0;top:0" width="1920" height="1040"><rect x="1711" y="244" width="14" height="14" fill="#fff" fill-opacity="0.12" stroke="#fff" stroke-opacity="0.82" stroke-width="2"/><circle cx="1718.2" cy="250.8" r="4.6" fill="#b8b830" stroke="#141414" stroke-width="1.7"/></svg>
<div class="t" style="left:91.9px;top:745.5px;font-size:31.60px;color:#f4f4f4;font-weight:normal;letter-spacing:0.00px;">Current Reading</div>
<div class="t" style="left:91.9px;top:793.9px;font-size:26.40px;color:#f4f4f4;font-weight:normal;letter-spacing:0.00px;">x: 0,438</div>
<div class="t" style="left:91.9px;top:837.3px;font-size:26.40px;color:#f4f4f4;font-weight:normal;letter-spacing:0.00px;">y: 0,5364</div>
<div class="t" style="left:91.9px;top:880.8px;font-size:26.40px;color:#f4f4f4;font-weight:normal;letter-spacing:0.00px;">fL: 88,81</div>
<div class="t" style="left:91.9px;top:924.2px;font-size:26.40px;color:#f4f4f4;font-weight:normal;letter-spacing:0.00px;">cd/m&sup2;: 304,28</div>
<div class="a" style="left:455.5px;top:750.1px;width:266.7px;height:191.9px;background:#232323"></div>
<svg class="a" style="left:0;top:0" width="1920" height="1040"><path d="M449.5,770.3 L722.2,770.3 M449.5,809.1 L722.2,809.1 M449.5,847.4 L722.2,847.4 M449.5,885.9 L722.2,885.9 M449.5,924.3 L722.2,924.3 M455.5,948.0 L455.5,750.1 L722.2,750.1 L722.2,948.0 M455.5,942.0 L722.2,942.0" stroke="#a8a8a8" stroke-width="2" fill="none"/><defs><linearGradient id="rb" x1="0" y1="0" x2="0" y2="1"><stop offset="0" stop-color="#ff5454"/><stop offset="1" stop-color="#ff3a3a"/></linearGradient><linearGradient id="gb" x1="0" y1="0" x2="0" y2="1"><stop offset="0" stop-color="#4ea84e"/><stop offset="1" stop-color="#3c9c3c"/></linearGradient><linearGradient id="bb" x1="0" y1="0" x2="0" y2="1"><stop offset="0" stop-color="#5656ff"/><stop offset="1" stop-color="#4040f0"/></linearGradient></defs><rect x="482.0" y="843.9" width="69.8" height="98.1" fill="url(#rb)" stroke="#000" stroke-width="1.6"/><rect x="553.2" y="843.9" width="70.0" height="98.1" fill="url(#gb)" stroke="#000" stroke-width="1.6"/><rect x="624.2" y="856.3" width="70.4" height="85.7" fill="url(#bb)" stroke="#000" stroke-width="1.6"/><path d="M455.5,942.0 L722.2,942.0" stroke="#a8a8a8" stroke-width="2" fill="none"/></svg>
<div class="t" style="left:449.0px;top:763.2px;font-size:14.60px;color:#e4e4e4;font-weight:normal;letter-spacing:0.00px;transform:translateX(-100%) scaleX(1.000);transform-origin:100% 50%;">104</div>
<div class="t" style="left:449.0px;top:802.0px;font-size:14.60px;color:#e4e4e4;font-weight:normal;letter-spacing:0.00px;transform:translateX(-100%) scaleX(1.000);transform-origin:100% 50%;">102</div>
<div class="t" style="left:449.0px;top:840.3px;font-size:14.60px;color:#e4e4e4;font-weight:normal;letter-spacing:0.00px;transform:translateX(-100%) scaleX(1.000);transform-origin:100% 50%;">100</div>
<div class="t" style="left:449.0px;top:878.8px;font-size:14.60px;color:#e4e4e4;font-weight:normal;letter-spacing:0.00px;transform:translateX(-100%) scaleX(1.000);transform-origin:100% 50%;">98</div>
<div class="t" style="left:449.0px;top:917.2px;font-size:14.60px;color:#e4e4e4;font-weight:normal;letter-spacing:0.00px;transform:translateX(-100%) scaleX(1.000);transform-origin:100% 50%;">96</div>
<div class="t" style="left:573.5px;top:732.0px;font-size:15.00px;color:#e4e4e4;font-weight:normal;letter-spacing:0.00px;transform:translateX(-50%) scaleX(1.000);transform-origin:50% 50%;">RGB Balance</div>
<div class="t" style="left:589.4px;top:946.4px;font-size:14.80px;color:#e4e4e4;font-weight:normal;letter-spacing:0.00px;transform:translateX(-50%) scaleX(1.000);transform-origin:50% 50%;">100%</div>
<div class="a" style="left:744.5px;top:724.0px;width:776.5px;height:216.4px;background:#050505"></div>
<div class="a" style="left:745.5px;top:725.0px;width:774.0px;height:32.5px;background:linear-gradient(#3a3a3a,#323232 48%,#181818 52%,#111111)"></div>
<div class="a" style="left:745.5px;top:757.5px;width:774.0px;height:30.2px;background:#414141"></div>
<div class="a" style="left:745.5px;top:787.7px;width:774.0px;height:30.2px;background:#858585"></div>
<div class="a" style="left:745.5px;top:817.9px;width:774.0px;height:30.2px;background:#414141"></div>
<div class="a" style="left:745.5px;top:848.0px;width:774.0px;height:30.2px;background:#858585"></div>
<div class="a" style="left:745.5px;top:878.2px;width:774.0px;height:30.2px;background:#414141"></div>
<div class="a" style="left:745.5px;top:908.4px;width:774.0px;height:30.2px;background:#858585"></div>
<div class="t" style="left:765.2px;top:763.7px;font-size:19.20px;color:#f2f2f2;font-weight:bold;letter-spacing:0.90px;transform:scaleX(1.100);transform-origin:0 50%;">x: CIE31</div>
<div class="t" style="left:959.4px;top:763.9px;font-size:19.00px;color:#f2f2f2;font-weight:normal;letter-spacing:1.00px;transform:scaleX(1.140);transform-origin:0 50%;">0,3375</div>
<div class="t" style="left:1073.0px;top:763.9px;font-size:19.00px;color:#f2f2f2;font-weight:normal;letter-spacing:1.00px;transform:scaleX(1.140);transform-origin:0 50%;">0,3616</div>
<div class="t" style="left:1186.6px;top:763.9px;font-size:19.00px;color:#f2f2f2;font-weight:normal;letter-spacing:1.00px;transform:scaleX(1.140);transform-origin:0 50%;">0,3874</div>
<div class="t" style="left:1300.2px;top:763.9px;font-size:19.00px;color:#f2f2f2;font-weight:normal;letter-spacing:1.00px;transform:scaleX(1.140);transform-origin:0 50%;">0,4149</div>
<div class="t" style="left:1413.8px;top:763.9px;font-size:19.00px;color:#f2f2f2;font-weight:normal;letter-spacing:1.00px;transform:scaleX(1.140);transform-origin:0 50%;">0,4380</div>
<div class="t" style="left:765.2px;top:793.9px;font-size:19.20px;color:#f2f2f2;font-weight:bold;letter-spacing:0.90px;transform:scaleX(1.100);transform-origin:0 50%;">y: CIE31</div>
<div class="t" style="left:959.4px;top:794.0px;font-size:19.00px;color:#f2f2f2;font-weight:normal;letter-spacing:1.00px;transform:scaleX(1.140);transform-origin:0 50%;">0,3692</div>
<div class="t" style="left:1073.0px;top:794.0px;font-size:19.00px;color:#f2f2f2;font-weight:normal;letter-spacing:1.00px;transform:scaleX(1.140);transform-origin:0 50%;">0,4093</div>
<div class="t" style="left:1186.6px;top:794.0px;font-size:19.00px;color:#f2f2f2;font-weight:normal;letter-spacing:1.00px;transform:scaleX(1.140);transform-origin:0 50%;">0,4524</div>
<div class="t" style="left:1300.2px;top:794.0px;font-size:19.00px;color:#f2f2f2;font-weight:normal;letter-spacing:1.00px;transform:scaleX(1.140);transform-origin:0 50%;">0,4979</div>
<div class="t" style="left:1413.8px;top:794.0px;font-size:19.00px;color:#f2f2f2;font-weight:normal;letter-spacing:1.00px;transform:scaleX(1.140);transform-origin:0 50%;">0,5364</div>
<div class="t" style="left:765.2px;top:824.0px;font-size:19.20px;color:#f2f2f2;font-weight:bold;letter-spacing:0.90px;transform:scaleX(1.100);transform-origin:0 50%;">Y</div>
<div class="t" style="left:959.4px;top:824.2px;font-size:19.00px;color:#f2f2f2;font-weight:normal;letter-spacing:1.00px;transform:scaleX(1.140);transform-origin:0 50%;">323,5518</div>
<div class="t" style="left:1073.0px;top:824.2px;font-size:19.00px;color:#f2f2f2;font-weight:normal;letter-spacing:1.00px;transform:scaleX(1.140);transform-origin:0 50%;">317,6399</div>
<div class="t" style="left:1186.6px;top:824.2px;font-size:19.00px;color:#f2f2f2;font-weight:normal;letter-spacing:1.00px;transform:scaleX(1.140);transform-origin:0 50%;">312,6248</div>
<div class="t" style="left:1300.2px;top:824.2px;font-size:19.00px;color:#f2f2f2;font-weight:normal;letter-spacing:1.00px;transform:scaleX(1.140);transform-origin:0 50%;">308,1327</div>
<div class="t" style="left:1413.8px;top:824.2px;font-size:19.00px;color:#f2f2f2;font-weight:normal;letter-spacing:1.00px;transform:scaleX(1.140);transform-origin:0 50%;">304,2777</div>
<div class="t" style="left:765.2px;top:854.2px;font-size:19.20px;color:#f2f2f2;font-weight:bold;letter-spacing:0.90px;transform:scaleX(1.100);transform-origin:0 50%;">Target x:CIE31</div>
<div class="t" style="left:959.4px;top:854.4px;font-size:19.00px;color:#f2f2f2;font-weight:normal;letter-spacing:1.00px;transform:scaleX(1.140);transform-origin:0 50%;">0,3386</div>
<div class="t" style="left:1073.0px;top:854.4px;font-size:19.00px;color:#f2f2f2;font-weight:normal;letter-spacing:1.00px;transform:scaleX(1.140);transform-origin:0 50%;">0,3620</div>
<div class="t" style="left:1186.6px;top:854.4px;font-size:19.00px;color:#f2f2f2;font-weight:normal;letter-spacing:1.00px;transform:scaleX(1.140);transform-origin:0 50%;">0,3865</div>
<div class="t" style="left:1300.2px;top:854.4px;font-size:19.00px;color:#f2f2f2;font-weight:normal;letter-spacing:1.00px;transform:scaleX(1.140);transform-origin:0 50%;">0,4114</div>
<div class="t" style="left:1413.8px;top:854.4px;font-size:19.00px;color:#f2f2f2;font-weight:normal;letter-spacing:1.00px;transform:scaleX(1.140);transform-origin:0 50%;">0,4378</div>
<div class="t" style="left:765.2px;top:884.4px;font-size:19.20px;color:#f2f2f2;font-weight:bold;letter-spacing:0.90px;transform:scaleX(1.100);transform-origin:0 50%;">Target y:CIE31</div>
<div class="t" style="left:959.4px;top:884.6px;font-size:19.00px;color:#f2f2f2;font-weight:normal;letter-spacing:1.00px;transform:scaleX(1.140);transform-origin:0 50%;">0,3718</div>
<div class="t" style="left:1073.0px;top:884.6px;font-size:19.00px;color:#f2f2f2;font-weight:normal;letter-spacing:1.00px;transform:scaleX(1.140);transform-origin:0 50%;">0,4105</div>
<div class="t" style="left:1186.6px;top:884.6px;font-size:19.00px;color:#f2f2f2;font-weight:normal;letter-spacing:1.00px;transform:scaleX(1.140);transform-origin:0 50%;">0,4510</div>
<div class="t" style="left:1300.2px;top:884.6px;font-size:19.00px;color:#f2f2f2;font-weight:normal;letter-spacing:1.00px;transform:scaleX(1.140);transform-origin:0 50%;">0,4922</div>
<div class="t" style="left:1413.8px;top:884.6px;font-size:19.00px;color:#f2f2f2;font-weight:normal;letter-spacing:1.00px;transform:scaleX(1.140);transform-origin:0 50%;">0,5359</div>
<div class="t" style="left:765.2px;top:914.6px;font-size:19.20px;color:#f2f2f2;font-weight:bold;letter-spacing:0.90px;transform:scaleX(1.100);transform-origin:0 50%;">Target Y</div>
<div class="t" style="left:959.4px;top:914.8px;font-size:19.00px;color:#f2f2f2;font-weight:normal;letter-spacing:1.00px;transform:scaleX(1.140);transform-origin:0 50%;">320,4912</div>
<div class="t" style="left:1073.0px;top:914.8px;font-size:19.00px;color:#f2f2f2;font-weight:normal;letter-spacing:1.00px;transform:scaleX(1.140);transform-origin:0 50%;">314,7827</div>
<div class="t" style="left:1186.6px;top:914.8px;font-size:19.00px;color:#f2f2f2;font-weight:normal;letter-spacing:1.00px;transform:scaleX(1.140);transform-origin:0 50%;">310,0179</div>
<div class="t" style="left:1300.2px;top:914.8px;font-size:19.00px;color:#f2f2f2;font-weight:normal;letter-spacing:1.00px;transform:scaleX(1.140);transform-origin:0 50%;">306,0887</div>
<div class="t" style="left:1413.8px;top:914.8px;font-size:19.00px;color:#f2f2f2;font-weight:normal;letter-spacing:1.00px;transform:scaleX(1.140);transform-origin:0 50%;">302,6633</div>
<div class="t" style="left:1008.4px;top:734.3px;font-size:16.60px;color:#ffffff;font-weight:bold;letter-spacing:1.20px;transform:translateX(-50%) scaleX(1.150);transform-origin:50% 50%;">20%</div>
<div class="t" style="left:1122.0px;top:734.3px;font-size:16.60px;color:#ffffff;font-weight:bold;letter-spacing:1.20px;transform:translateX(-50%) scaleX(1.150);transform-origin:50% 50%;">40%</div>
<div class="t" style="left:1235.6px;top:734.3px;font-size:16.60px;color:#ffffff;font-weight:bold;letter-spacing:1.20px;transform:translateX(-50%) scaleX(1.150);transform-origin:50% 50%;">60%</div>
<div class="t" style="left:1349.2px;top:734.3px;font-size:16.60px;color:#ffffff;font-weight:bold;letter-spacing:1.20px;transform:translateX(-50%) scaleX(1.150);transform-origin:50% 50%;">80%</div>
<div class="t" style="left:1462.8px;top:734.3px;font-size:16.60px;color:#ffffff;font-weight:bold;letter-spacing:1.20px;transform:translateX(-50%) scaleX(1.150);transform-origin:50% 50%;">100%</div>
<div class="a" style="left:0.0px;top:969.5px;width:1920.0px;height:70.5px;background:linear-gradient(#4c4c4c,#454545 15%,#3a3a3a 35%,#2e2e2e 65%,#222 95%,#202020)"></div>
<div class="a" style="left:1.0px;top:970.0px;width:51.0px;height:70.0px;background:linear-gradient(#a6a6a6,#8a8a8a 40%,#6e6e6e 85%,#777);border-radius:5px 5px 0 0"></div>
<div class="a" style="left:18.2px;top:971.5px;width:17.0px;height:17.0px;border-radius:50%;background:radial-gradient(circle at 50% 40%,#6e6e6e,#7a7a7a 60%,#8c8c8c)"></div>
<svg class="a" style="left:0;top:960px" width="60" height="40"><path d="M22.2,25.2 L31.2,25.2 L26.7,19.8Z" fill="#1e1e1e"/></svg>
<div class="a" style="left:6.8px;top:999.0px;width:40.0px;height:34.5px;background:#ffff00;border:1.5px solid #b8b800;border-radius:4px;box-shadow:0 0 1px #555"></div>
<div class="a" style="left:59.0px;top:970.0px;width:169.0px;height:70.0px;background:linear-gradient(#a8a8a8,#8c8c8c 30%,#6a6a6a 75%,#5e5e5e);border-radius:5px 5px 0 0"></div>
<div class="a" style="left:65.0px;top:976.0px;width:157.5px;height:40.6px;background:#c0c0a0;border:1px solid #7e7e60;border-radius:5px;box-shadow:inset 0 1px 1px rgba(0,0,0,0.25)"></div>
<div class="t" style="left:143.5px;top:1023.0px;font-size:12.40px;color:#222222;font-weight:bold;letter-spacing:0.00px;transform:translateX(-50%) scaleX(1.000);transform-origin:50% 50%;">20%</div>
<div class="a" style="left:231.0px;top:970.0px;width:169.0px;height:70.0px;background:linear-gradient(#a8a8a8,#8c8c8c 30%,#6a6a6a 75%,#5e5e5e);border-radius:5px 5px 0 0"></div>
<div class="a" style="left:237.0px;top:976.0px;width:157.5px;height:40.6px;background:#c4c484;border:1px solid #7e7e60;border-radius:5px;box-shadow:inset 0 1px 1px rgba(0,0,0,0.25)"></div>
<div class="t" style="left:315.5px;top:1023.0px;font-size:12.40px;color:#222222;font-weight:bold;letter-spacing:0.00px;transform:translateX(-50%) scaleX(1.000);transform-origin:50% 50%;">40%</div>
<div class="a" style="left:403.0px;top:970.0px;width:169.0px;height:70.0px;background:linear-gradient(#a8a8a8,#8c8c8c 30%,#6a6a6a 75%,#5e5e5e);border-radius:5px 5px 0 0"></div>
<div class="a" style="left:409.0px;top:976.0px;width:157.5px;height:40.6px;background:#c4c464;border:1px solid #7e7e60;border-radius:5px;box-shadow:inset 0 1px 1px rgba(0,0,0,0.25)"></div>
<div class="t" style="left:487.5px;top:1023.0px;font-size:12.40px;color:#222222;font-weight:bold;letter-spacing:0.00px;transform:translateX(-50%) scaleX(1.000);transform-origin:50% 50%;">60%</div>
<div class="a" style="left:575.0px;top:970.0px;width:169.0px;height:70.0px;background:linear-gradient(#a8a8a8,#8c8c8c 30%,#6a6a6a 75%,#5e5e5e);border-radius:5px 5px 0 0"></div>
<div class="a" style="left:581.0px;top:976.0px;width:157.5px;height:40.6px;background:#c4c044;border:1px solid #7e7e60;border-radius:5px;box-shadow:inset 0 1px 1px rgba(0,0,0,0.25)"></div>
<div class="t" style="left:659.5px;top:1023.0px;font-size:12.40px;color:#222222;font-weight:bold;letter-spacing:0.00px;transform:translateX(-50%) scaleX(1.000);transform-origin:50% 50%;">80%</div>
<div class="a" style="left:746.2px;top:970.0px;width:169.5px;height:70.0px;background:linear-gradient(#1c1c1c,#262626 40%,#303030);border-radius:6px 6px 0 0"></div>
<div class="a" style="left:751.4px;top:975.0px;width:159.0px;height:41.6px;background:#c8c000;border:1.5px solid #0e0e0e;border-radius:5px"></div>
<div class="t" style="left:831.6px;top:1022.8px;font-size:12.40px;color:#ffffff;font-weight:bold;letter-spacing:0.00px;transform:translateX(-50%) scaleX(1.000);transform-origin:50% 50%;">100%</div>
<div class="a" style="left:1564.3px;top:969.5px;width:54.5px;height:70.5px;background:linear-gradient(#a0a0a0,#8e8e8e);border-radius:5px 5px 0 0"></div>
<div class="a" style="left:1564.3px;top:990.2px;width:54.5px;height:1.6px;background:#3a3a3a"></div>
<div class="a" style="left:1564.3px;top:991.8px;width:54.5px;height:48.2px;background:linear-gradient(90deg,#6a6a6a,#8e8e8e 30%,#8e8e8e 70%,#6a6a6a)"></div>
<div class="a" style="left:1583.2px;top:971.0px;width:17.0px;height:17.0px;border-radius:50%;background:radial-gradient(circle at 50% 40%,#7a7a7a,#888 60%,#9a9a9a)"></div>
<svg class="a" style="left:1560px;top:960px" width="60" height="80"><path d="M27.2,25 L36.4,25 L31.8,19.8Z" fill="#2a2a2a"/><rect x="15.8" y="38.5" width="31" height="31.5" rx="5" fill="#b4b4b4" stroke="#141414" stroke-width="2.6"/><rect x="24.2" y="47.5" width="15.2" height="15.2" fill="#0a0a0a"/></svg>
<div class="a" style="left:1619.0px;top:970.0px;width:51.4px;height:33.0px;background:linear-gradient(#aaaaaa,#8a8a8a 50%,#707070);border-left:1px solid #3a3a3a"></div>
<div class="a" style="left:1633.2px;top:975.5px;width:23.0px;height:22.5px;border-radius:50%;background:radial-gradient(circle at 50% 35%,#7a7a7a,#8a8a8a 60%,#9c9c9c)"></div>
<div class="a" style="left:1670.4px;top:970.0px;width:51.4px;height:33.0px;background:linear-gradient(#aaaaaa,#8a8a8a 50%,#707070);border-left:1px solid #3a3a3a"></div>
<div class="a" style="left:1684.6px;top:975.5px;width:23.0px;height:22.5px;border-radius:50%;background:radial-gradient(circle at 50% 35%,#7a7a7a,#8a8a8a 60%,#9c9c9c)"></div>
<div class="a" style="left:1721.8px;top:970.0px;width:51.4px;height:33.0px;background:linear-gradient(#aaaaaa,#8a8a8a 50%,#707070);border-left:1px solid #3a3a3a"></div>
<div class="a" style="left:1736.0px;top:975.5px;width:23.0px;height:22.5px;border-radius:50%;background:radial-gradient(circle at 50% 35%,#7a7a7a,#8a8a8a 60%,#9c9c9c)"></div>
<div class="a" style="left:1773.2px;top:970.0px;width:51.4px;height:33.0px;background:linear-gradient(#aaaaaa,#8a8a8a 50%,#707070);border-left:1px solid #3a3a3a"></div>
<div class="a" style="left:1787.4px;top:975.5px;width:23.0px;height:22.5px;border-radius:50%;background:radial-gradient(circle at 50% 35%,#7a7a7a,#8a8a8a 60%,#9c9c9c)"></div>
<div class="a" style="left:1824.6px;top:970.0px;width:51.4px;height:33.0px;background:linear-gradient(#aaaaaa,#8a8a8a 50%,#707070);border-left:1px solid #3a3a3a"></div>
<div class="a" style="left:1838.8px;top:975.5px;width:23.0px;height:22.5px;border-radius:50%;background:radial-gradient(circle at 50% 35%,#7a7a7a,#8a8a8a 60%,#9c9c9c)"></div>
<svg class="a" style="left:1619px;top:970px" width="260" height="34" fill="#333" stroke="#333"><rect x="22" y="12.5" width="8.5" height="8.5" stroke="none"/><path d="M74,11.5 L82,16.7 L74,22Z" stroke="none"/><path d="M124,11.5 L122.5,11.5 L122.5,22 L124,22 M133.5,11.5 L135,11.5 L135,22 L133.5,22" fill="none" stroke-width="1.8"/><circle cx="127" cy="16.7" r="1" stroke="none"/><circle cx="130.5" cy="16.7" r="1" stroke="none"/><path d="M180.5,16.7 C178,12.5 173.5,12.5 173.5,16.7 C173.5,21 178,21 180.5,16.7 C183,12.5 187.5,12.5 187.5,16.7 C187.5,21 183,21 180.5,16.7Z" fill="none" stroke-width="2"/><path d="M226,15 A5.5,5.5 0 0 1 236,14 M236,18.5 A5.5,5.5 0 0 1 226,19.5" fill="none" stroke-width="2.2"/><path d="M236.8,10.5 L237.2,15.5 L232.5,14.5Z M225.2,23 L224.8,18 L229.5,19Z" stroke="none"/></svg>
<div class="a" style="left:1876.0px;top:970.0px;width:44.0px;height:33.0px;background:linear-gradient(#2e2e2e,#262626)"></div>
<div class="a" style="left:1890.5px;top:975.0px;width:23.0px;height:23.0px;border-radius:50%;background:radial-gradient(circle at 50% 35%,#3a3a3a,#2c2c2c 60%,#262626)"></div>
<div class="a" style="left:1619.0px;top:1003.0px;width:301.0px;height:2.0px;background:#2a2a2a"></div>
<div class="a" style="left:1619.0px;top:1005.0px;width:155.0px;height:35.0px;background:linear-gradient(#b4b4b4,#9a9a9a 45%,#7e7e7e);border-left:1px solid #3a3a3a"></div>
<div class="a" style="left:1774.0px;top:1005.0px;width:146.0px;height:35.0px;background:linear-gradient(#b4b4b4,#9a9a9a 45%,#7e7e7e);border-left:1px solid #4a4a4a"></div>
<div class="a" style="left:1643.7px;top:1010.0px;width:22.0px;height:22.0px;border-radius:50%;background:radial-gradient(circle at 50% 35%,#8a8a8a,#9a9a9a 60%,#a8a8a8)"></div>
<div class="a" style="left:1884.6px;top:1010.0px;width:22.0px;height:22.0px;border-radius:50%;background:radial-gradient(circle at 50% 35%,#8a8a8a,#9a9a9a 60%,#a8a8a8)"></div>
<div class="t" style="left:1654.5px;top:1010.5px;font-size:20.00px;color:#333;font-weight:bold;letter-spacing:0.00px;transform:translateX(-50%) scaleX(1.000);transform-origin:50% 50%;">&laquo;</div>
<div class="t" style="left:1896.0px;top:1010.5px;font-size:20.00px;color:#333;font-weight:bold;letter-spacing:0.00px;transform:translateX(-50%) scaleX(1.000);transform-origin:50% 50%;">&raquo;</div>
<div class="t" style="left:1685.0px;top:1010.0px;font-size:24.20px;color:#2a2a2a;font-weight:bold;letter-spacing:0.00px;">Back</div>
<div class="t" style="left:1805.6px;top:1010.0px;font-size:24.20px;color:#2a2a2a;font-weight:bold;letter-spacing:0.00px;">Next</div>
</body></html>
